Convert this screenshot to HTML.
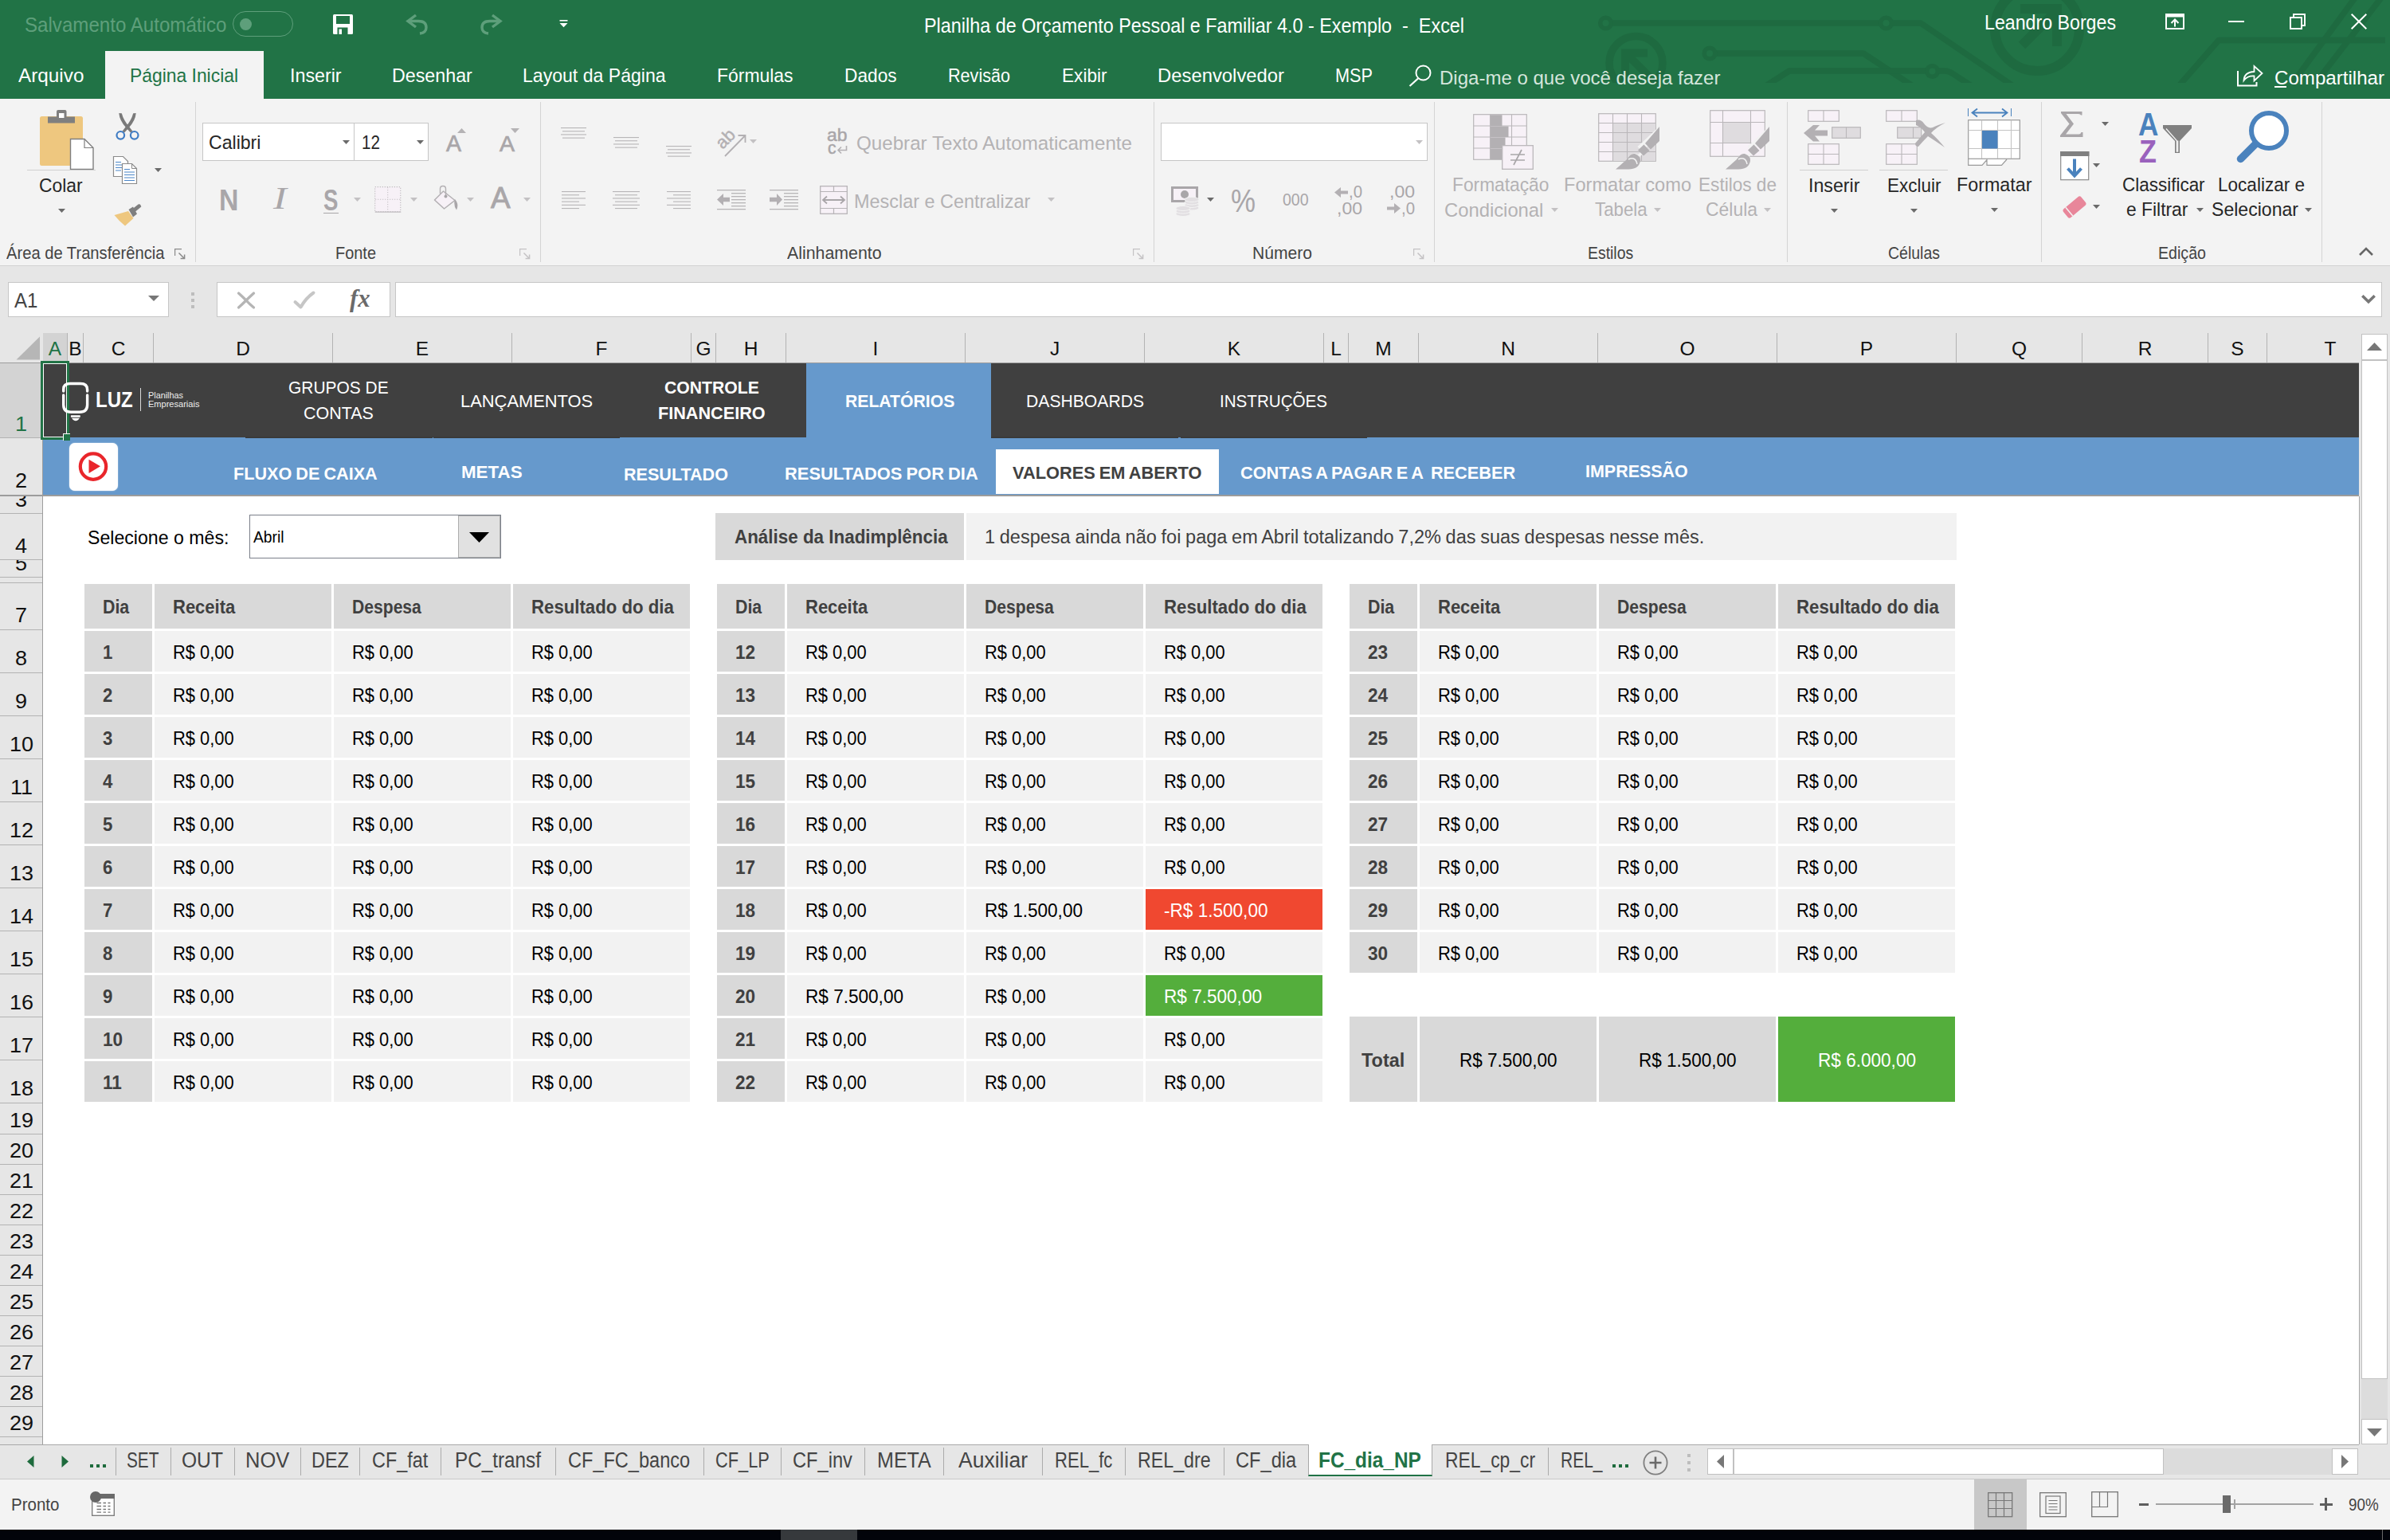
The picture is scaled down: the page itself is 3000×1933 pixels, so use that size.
<!DOCTYPE html>
<html lang="pt-BR"><head><meta charset="utf-8"><title>Planilha de Orçamento Pessoal e Familiar 4.0 - Exemplo - Excel</title>
<style>
html,body{margin:0;padding:0;background:#fff;}
body{width:3000px;height:1933px;overflow:hidden;position:relative;font-family:"Liberation Sans",sans-serif;}
.a{position:absolute;box-sizing:border-box;}
.t{position:absolute;white-space:pre;transform-origin:0 0;display:block;}
svg{overflow:visible;}
</style></head>
<body>
<!-- p1_title -->
<div class="a" id="titlebar" style="left:0;top:0;width:3000px;height:124px;background:#217346;overflow:hidden">
<svg class="a" style="left:0;top:0;overflow:hidden" width="3000" height="104" viewBox="0 0 3000 104"><g fill="none" stroke="#1e6a40" stroke-width="7.5" stroke-linecap="butt" stroke-linejoin="round">
<path d="M2023 29 H2360"/><circle cx="2015.5" cy="29" r="6.8" stroke-width="5.5"/>
<circle cx="2367.5" cy="29" r="6.8" stroke-width="5.5"/>
<path d="M2375 29 H2411 L2530 110"/>
<path d="M2154 67 H2339 L2404 110"/><circle cx="2146" cy="67" r="6.8" stroke-width="5.5"/>
<path d="M2213 110 L2246 89 H2418"/>
<circle cx="2425.5" cy="89.5" r="6.8" stroke-width="5.5"/>
<path d="M2433 89 H2441 Q2446 89 2452 93 L2478 110"/>
<circle cx="2053.5" cy="79" r="33.5" stroke-width="9.5"/>
<path d="M2035 66.5 H2068 M2040 62 V104 M2040 66 L2072 98" stroke-width="10" stroke-linejoin="miter"/>
<circle cx="2557" cy="36" r="53" stroke-width="12"/>
<path d="M2536 11 H2582 V58 M2538 57 L2578 17" stroke-width="12" stroke-linejoin="miter"/>
<path d="M2733 110 L2785 50.5 H2994"/>
<path d="M2873.6 110 L2957 -4"/>
<path d="M2902 110 L2990 -4"/>
</g></svg>
</div>
<span class="t" style="left:30.6px;top:19.24px;font-size:25px;line-height:25px;color:#5e9f7b;transform:scaleX(0.9648);">Salvamento Automático</span>
<div class="a" style="left:292px;top:14px;width:76px;height:32px;border:1.5px solid #5e9f7b;border-radius:16px"></div>
<div class="a" style="left:300.5px;top:22.5px;width:15px;height:15px;border-radius:50%;background:#5e9f7b"></div>
<svg class="a" style="left:418px;top:18px;" width="25" height="25" viewBox="0 0 25 25"><path d="M1.5 0H23.5Q25 0 25 1.5V23.5Q25 25 23.5 25H1.5Q0 25 0 23.5V1.5Q0 0 1.5 0Z" fill="#fff"/><rect x="4" y="2" width="17" height="10" fill="#217346"/><rect x="5.5" y="16.5" width="13" height="8.5" fill="#217346"/><rect x="7.5" y="18.5" width="3.5" height="6.5" fill="#fff"/></svg>
<svg class="a" style="left:508px;top:15px;" width="32" height="30" viewBox="0 0 32 30"><path d="M14 4 L4 11.5 L14 19" fill="none" stroke="#5e9f7b" stroke-width="3.4" stroke-linejoin="miter"/><path d="M5 11.5 H17 Q27 11.5 27 19.5 Q27 26 19 27" fill="none" stroke="#5e9f7b" stroke-width="3.4"/></svg>
<svg class="a" style="left:602px;top:15px;" width="32" height="30" viewBox="0 0 32 30"><path d="M16 4 L26 11.5 L16 19" fill="none" stroke="#5e9f7b" stroke-width="3.4"/><path d="M25 11.5 H13 Q3 11.5 3 19.5 Q3 26 11 27" fill="none" stroke="#5e9f7b" stroke-width="3.4"/></svg>
<svg class="a" style="left:702px;top:24px;" width="11" height="11" viewBox="0 0 11 11"><rect x="0.5" y="1" width="10" height="1.6" fill="#fff"/><path d="M0.5 5 H10.5 L5.5 10.2Z" fill="#fff"/></svg>
<span class="t" style="left:1160px;top:20.24px;font-size:25px;line-height:25px;color:#fff;transform:scaleX(0.9348);">Planilha de Orçamento Pessoal e Familiar 4.0 - Exemplo  -  Excel</span>
<span class="t" style="left:2491px;top:16.24px;font-size:25px;line-height:25px;color:#fff;transform:scaleX(0.9275);">Leandro Borges</span>
<svg class="a" style="left:2718px;top:17px;" width="24" height="20" viewBox="0 0 24 20"><rect x="1" y="1" width="22" height="18" fill="none" stroke="#fff" stroke-width="2"/><rect x="1" y="1" width="22" height="3.5" fill="#fff"/><path d="M12 16.5 V8 M7.5 12 L12 7.5 L16.5 12" fill="none" stroke="#fff" stroke-width="2"/></svg>
<div class="a " style="left:2797px;top:26px;width:20px;height:2px;background:#fff;"></div>
<svg class="a" style="left:2874px;top:17px;" width="20" height="20" viewBox="0 0 20 20"><rect x="1" y="5" width="14" height="14" fill="none" stroke="#fff" stroke-width="2"/><path d="M5 5 V1 H19 V15 H15" fill="none" stroke="#fff" stroke-width="2"/></svg>
<svg class="a" style="left:2951px;top:17px;" width="20" height="20" viewBox="0 0 20 20"><path d="M0.7 0.7 L19.3 19.3 M19.3 0.7 L0.7 19.3" stroke="#fff" stroke-width="2" fill="none"/></svg>
<div class="a " style="left:132px;top:64px;width:199px;height:60px;background:#f3f3f3;"></div>
<span class="t" style="left:23px;top:82.66px;font-size:24.5px;line-height:24.5px;color:#fff;transform:scaleX(0.9918);">Arquivo</span>
<span class="t" style="left:163px;top:82.66px;font-size:24.5px;line-height:24.5px;color:#217346;transform:scaleX(0.9333);">Página Inicial</span>
<span class="t" style="left:364px;top:82.66px;font-size:24.5px;line-height:24.5px;color:#fff;transform:scaleX(0.9491);">Inserir</span>
<span class="t" style="left:491.6px;top:82.66px;font-size:24.5px;line-height:24.5px;color:#fff;transform:scaleX(0.9489);">Desenhar</span>
<span class="t" style="left:656px;top:82.66px;font-size:24.5px;line-height:24.5px;color:#fff;transform:scaleX(0.9416);">Layout da Página</span>
<span class="t" style="left:900px;top:82.66px;font-size:24.5px;line-height:24.5px;color:#fff;transform:scaleX(0.9362);">Fórmulas</span>
<span class="t" style="left:1060px;top:82.66px;font-size:24.5px;line-height:24.5px;color:#fff;transform:scaleX(0.9262);">Dados</span>
<span class="t" style="left:1190px;top:82.66px;font-size:24.5px;line-height:24.5px;color:#fff;transform:scaleX(0.8812);">Revisão</span>
<span class="t" style="left:1333px;top:82.66px;font-size:24.5px;line-height:24.5px;color:#fff;transform:scaleX(0.9237);">Exibir</span>
<span class="t" style="left:1453px;top:82.66px;font-size:24.5px;line-height:24.5px;color:#fff;transform:scaleX(0.9730);">Desenvolvedor</span>
<span class="t" style="left:1676px;top:82.66px;font-size:24.5px;line-height:24.5px;color:#fff;transform:scaleX(0.8853);">MSP</span>
<svg class="a" style="left:1768px;top:78px;" width="32" height="32" viewBox="0 0 32 32"><circle cx="18.5" cy="13.5" r="9" fill="none" stroke="#fff" stroke-width="2"/><path d="M12 20.5 L1.5 30" stroke="#fff" stroke-width="2.2" fill="none"/></svg>
<span class="t" style="left:1807px;top:85.66px;font-size:24.5px;line-height:24.5px;color:#d5e6dc;transform:scaleX(0.9801);">Diga-me o que você deseja fazer</span>
<svg class="a" style="left:2808px;top:80px;" width="34" height="29" viewBox="0 0 34 29"><path d="M1 9 V27.5 H24.5 V23" fill="none" stroke="#fff" stroke-width="2"/><path d="M8.5 21 Q9 10.5 21.5 10 V3 L31.5 12 L21.5 21.5 V15.5 Q13 15 8.5 21Z" fill="none" stroke="#fff" stroke-width="1.8" stroke-linejoin="miter"/></svg>
<span class="t" style="left:2855px;top:85.66px;font-size:24.5px;line-height:24.5px;color:#fff;transform:scaleX(0.9840);">Compartilhar</span>
<div class="a " style="left:2855px;top:108px;width:15px;height:1.5px;background:#fff;"></div>
<!-- p2_ribbon -->
<div class="a" id="ribbon" style="left:0;top:124px;width:3000px;height:210px;background:#f3f3f3;border-bottom:1px solid #d2d2d2"></div>
<div class="a " style="left:245px;top:128px;width:1px;height:201px;background:#d4d4d4;"></div>
<div class="a " style="left:678px;top:128px;width:1px;height:201px;background:#d4d4d4;"></div>
<div class="a " style="left:1448px;top:128px;width:1px;height:201px;background:#d4d4d4;"></div>
<div class="a " style="left:1800px;top:128px;width:1px;height:201px;background:#d4d4d4;"></div>
<div class="a " style="left:2243px;top:128px;width:1px;height:201px;background:#d4d4d4;"></div>
<div class="a " style="left:2562px;top:128px;width:1px;height:201px;background:#d4d4d4;"></div>
<div class="a " style="left:2914px;top:128px;width:1px;height:201px;background:#d4d4d4;"></div>
<svg class="a" style="left:50px;top:138px;" width="68" height="76" viewBox="0 0 68 76"><rect x="0" y="8" width="54" height="62" rx="2.5" fill="#eec77f"/>
<path d="M10 8.5 H21 V2 Q21 0 23 0 H31.5 Q33.5 0 33.5 2 V8.5 H44 V16.5 H10Z" fill="#7f7f7f"/>
<rect x="24" y="4" width="6.5" height="6" fill="#fff"/>
<path d="M38.5 36.5 H56 L67 47.5 V74.5 H38.5Z" fill="#fff" stroke="#7f7f7f" stroke-width="1.4"/>
<path d="M56 36.5 V47.5 H67" fill="none" stroke="#7f7f7f" stroke-width="1.2"/></svg>
<div class="a " style="left:34px;top:213px;width:86px;height:1px;background:#d0d0d0;"></div>
<span class="t" style="left:49.4px;top:221.26px;font-size:24.5px;line-height:24.5px;color:#262626;transform:scaleX(0.9325);">Colar</span>
<svg class="a" style="left:73px;top:262px;" width="9" height="5" viewBox="0 0 9 5"><path d="M0 0H9L4.5 5Z" fill="#6a6a6a"/></svg>
<svg class="a" style="left:143px;top:140px;" width="34" height="38" viewBox="0 0 34 38"><path d="M6.3 2 L9.8 2.3 Q12 11 19.5 19.5 L23.5 24.8 L20.8 26.5 L15 20 Q7 11 6.3 2Z" fill="#7a7a7a"/>
<path d="M27.7 2 L24.2 2.3 Q22 11 14.5 19.5 L10.5 24.8 L13.2 26.5 L19 20 Q27 11 27.7 2Z" fill="#7a7a7a"/>
<circle cx="8.3" cy="29.8" r="4.8" fill="none" stroke="#3f7cc4" stroke-width="2.2"/>
<circle cx="25.7" cy="29.8" r="4.8" fill="none" stroke="#3f7cc4" stroke-width="2.2"/></svg>
<svg class="a" style="left:141px;top:195px;" width="33" height="37" viewBox="0 0 33 37"><path d="M1.5 1.5 H13.5 L19.5 7.5 V26.5 H1.5Z" fill="#fff" stroke="#8a8a8a" stroke-width="1.2"/>
<path d="M4 8.5H11M4 12H15M4 15.5H15M4 19H11" stroke="#4a86c8" stroke-width="1.2"/>
<path d="M12.5 10.5 H24.5 L30.5 16.5 V35.5 H12.5Z" fill="#fff" stroke="#8a8a8a" stroke-width="1.2"/>
<path d="M24.5 10.5 V16.5 H30.5" fill="none" stroke="#8a8a8a" stroke-width="1"/>
<path d="M15 17.5H22M15 21H28M15 24.5H28M15 28H28M15 31.5H28" stroke="#4a86c8" stroke-width="1.2"/></svg>
<svg class="a" style="left:194px;top:211px;" width="9" height="5" viewBox="0 0 9 5"><path d="M0 0H9L4.5 5Z" fill="#6a6a6a"/></svg>
<svg class="a" style="left:142px;top:255px;" width="36" height="30" viewBox="0 0 36 30"><path d="M24 7.5 L31.5 1.5 Q33.5 0.5 34.5 2.5 L35.3 4.5 L27.5 11Z" fill="#7f7f7f"/>
<path d="M19.5 8 L25 4.5 L30 13.5 L25 17.5Z" fill="#7f7f7f"/>
<path d="M1.5 15 L19 10 L25.5 19 L15 28.5 Q7 22 1.5 15Z" fill="#eec77f"/></svg>
<span class="t" style="left:7.5px;top:307.12px;font-size:21.6px;line-height:21.6px;color:#444;transform:scaleX(0.9339);">Área de Transferência</span>
<svg class="a" style="left:218.5px;top:311.5px;" width="14" height="14" viewBox="0 0 14 14"><path d="M0.6 9 V0.6 H9" fill="none" stroke="#8a8a8a" stroke-width="1.2"/><path d="M5.5 5.5 L12.2 12.2 M12.6 7.6 V12.6 H7.6" fill="none" stroke="#8a8a8a" stroke-width="1.5"/></svg>
<div class="a" style="left:254px;top:154px;width:284px;height:48px;background:#fff;border:1px solid #c6c6c6"></div>
<div class="a " style="left:444px;top:155px;width:1px;height:46px;background:#c6c6c6;"></div>
<span class="t" style="left:261.6px;top:167.26px;font-size:24.5px;line-height:24.5px;color:#262626;transform:scaleX(0.9419);">Calibri</span>
<svg class="a" style="left:430px;top:175.5px;" width="9" height="5" viewBox="0 0 9 5"><path d="M0 0H9L4.5 5Z" fill="#6a6a6a"/></svg>
<span class="t" style="left:454px;top:167.26px;font-size:24.5px;line-height:24.5px;color:#262626;transform:scaleX(0.8442);">12</span>
<svg class="a" style="left:523px;top:175.5px;" width="9" height="5" viewBox="0 0 9 5"><path d="M0 0H9L4.5 5Z" fill="#6a6a6a"/></svg>
<span class="t" style="left:560px;top:165.85px;font-size:29px;line-height:29px;color:#a9a6a9;transform:scaleX(0.9823);-webkit-text-stroke:0.7px #a9a6a9;">A</span>
<svg class="a" style="left:574px;top:160.5px;" width="11" height="6" viewBox="0 0 11 6"><path d="M0 6H11L5.5 0Z" fill="#b5b3b5"/></svg>
<span class="t" style="left:627px;top:167.12px;font-size:27.5px;line-height:27.5px;color:#a9a6a9;transform:scaleX(1.0358);-webkit-text-stroke:0.7px #a9a6a9;">A</span>
<svg class="a" style="left:641px;top:160.5px;" width="11" height="6" viewBox="0 0 11 6"><path d="M0 0H11L5.5 6Z" fill="#b5b3b5"/></svg>
<span class="t" style="left:275px;top:232.68px;font-size:37px;line-height:37px;color:#a9a6a9;font-weight:700;transform:scaleX(0.9134);">N</span>
<span class="t" style="left:343.2px;top:229.39px;font-size:39px;line-height:39px;color:#a9a6a9;font-style:italic;font-family:'Liberation Serif',serif;transform:scaleX(1.2923);">I</span>
<span class="t" style="left:406px;top:233.53px;font-size:36px;line-height:36px;color:#a9a6a9;font-weight:700;transform:scaleX(0.7663);">S</span>
<div class="a " style="left:406px;top:266.5px;width:19px;height:1.5px;background:#a9a6a9;"></div>
<svg class="a" style="left:444px;top:248px;" width="9" height="5" viewBox="0 0 9 5"><path d="M0 0H9L4.5 5Z" fill="#c3c1c3"/></svg>
<svg class="a" style="left:470px;top:234px;" width="34" height="33" viewBox="0 0 34 33"><rect x="0.7" y="0.7" width="32" height="31" fill="#f7f1f7" stroke="#c2bec2" stroke-width="1.2" stroke-dasharray="1.3 1.7"/>
<path d="M16.7 1 V32 M1 16.2 H33" stroke="#c8c4c8" stroke-width="1.1" stroke-dasharray="1.3 1.7"/>
<path d="M0.7 32.2 H33.3" stroke="#c2bec2" stroke-width="1.3"/></svg>
<svg class="a" style="left:515px;top:248px;" width="9" height="5" viewBox="0 0 9 5"><path d="M0 0H9L4.5 5Z" fill="#c3c1c3"/></svg>
<svg class="a" style="left:544px;top:232px;" width="33" height="33" viewBox="0 0 33 33"><path d="M12.5 8 L27 19.5 L13.5 30 L1.5 19Z" fill="#f7f1f7" stroke="#b3b0b3" stroke-width="1.5" stroke-linejoin="round"/>
<path d="M8.5 11 V5 Q8.5 1.5 12 1.5 Q15.5 1.5 15.5 5 V14" fill="none" stroke="#b3b0b3" stroke-width="1.4"/>
<circle cx="15.5" cy="14.5" r="2" fill="#a9a6a9"/>
<path d="M27 18 Q32.5 24 29 31.5 Q25.5 27 26.5 20Z" fill="#a9a6a9"/></svg>
<svg class="a" style="left:586px;top:248px;" width="9" height="5" viewBox="0 0 9 5"><path d="M0 0H9L4.5 5Z" fill="#c3c1c3"/></svg>
<span class="t" style="left:616.4px;top:230.26px;font-size:37.5px;line-height:37.5px;color:#a9a6a9;transform:scaleX(0.9835);-webkit-text-stroke:0.9px #a9a6a9;">A</span>
<svg class="a" style="left:657px;top:248px;" width="9" height="5" viewBox="0 0 9 5"><path d="M0 0H9L4.5 5Z" fill="#c3c1c3"/></svg>
<span class="t" style="left:420.5px;top:307.12px;font-size:21.6px;line-height:21.6px;color:#444;transform:scaleX(0.9234);">Fonte</span>
<svg class="a" style="left:652px;top:311.5px;" width="14" height="14" viewBox="0 0 14 14"><path d="M0.6 9 V0.6 H9" fill="none" stroke="#c4c2c4" stroke-width="1.2"/><path d="M5.5 5.5 L12.2 12.2 M12.6 7.6 V12.6 H7.6" fill="none" stroke="#c4c2c4" stroke-width="1.5"/></svg>
<svg class="a" style="left:704px;top:160px;" width="32" height="18" viewBox="0 0 32 18"><rect x="0.0" y="0.0" width="32" height="1.1" fill="#b7b5b7"/><rect x="2.0" y="4.2" width="28" height="1.1" fill="#b7b5b7"/><rect x="0.0" y="8.4" width="32" height="1.1" fill="#b7b5b7"/><rect x="2.0" y="12.6" width="28" height="1.1" fill="#b7b5b7"/></svg>
<svg class="a" style="left:770px;top:172px;" width="32" height="18" viewBox="0 0 32 18"><rect x="0.0" y="0.0" width="32" height="1.1" fill="#b7b5b7"/><rect x="2.0" y="4.2" width="28" height="1.1" fill="#b7b5b7"/><rect x="0.0" y="8.4" width="32" height="1.1" fill="#b7b5b7"/><rect x="2.0" y="12.6" width="28" height="1.1" fill="#b7b5b7"/></svg>
<svg class="a" style="left:836px;top:183px;" width="32" height="18" viewBox="0 0 32 18"><rect x="0.0" y="0.0" width="32" height="1.1" fill="#b7b5b7"/><rect x="2.0" y="4.2" width="28" height="1.1" fill="#b7b5b7"/><rect x="0.0" y="8.4" width="32" height="1.1" fill="#b7b5b7"/><rect x="2.0" y="12.6" width="28" height="1.1" fill="#b7b5b7"/></svg>
<svg class="a" style="left:705px;top:240px;" width="30" height="27" viewBox="0 0 30 27"><rect x="0.0" y="0.0" width="30" height="1.1" fill="#b7b5b7"/><rect x="0.0" y="4.2" width="22" height="1.1" fill="#b7b5b7"/><rect x="0.0" y="8.4" width="30" height="1.1" fill="#b7b5b7"/><rect x="0.0" y="12.6" width="22" height="1.1" fill="#b7b5b7"/><rect x="0.0" y="16.8" width="30" height="1.1" fill="#b7b5b7"/><rect x="0.0" y="21.0" width="22" height="1.1" fill="#b7b5b7"/></svg>
<svg class="a" style="left:769px;top:240px;" width="34" height="27" viewBox="0 0 34 27"><rect x="0.0" y="0.0" width="34" height="1.1" fill="#b7b5b7"/><rect x="3.0" y="4.2" width="28" height="1.1" fill="#b7b5b7"/><rect x="0.0" y="8.4" width="34" height="1.1" fill="#b7b5b7"/><rect x="3.0" y="12.6" width="28" height="1.1" fill="#b7b5b7"/><rect x="0.0" y="16.8" width="34" height="1.1" fill="#b7b5b7"/><rect x="3.0" y="21.0" width="28" height="1.1" fill="#b7b5b7"/></svg>
<svg class="a" style="left:837px;top:240px;" width="30" height="27" viewBox="0 0 30 27"><rect x="0.0" y="0.0" width="30" height="1.1" fill="#b7b5b7"/><rect x="8.0" y="4.2" width="22" height="1.1" fill="#b7b5b7"/><rect x="0.0" y="8.4" width="30" height="1.1" fill="#b7b5b7"/><rect x="8.0" y="12.6" width="22" height="1.1" fill="#b7b5b7"/><rect x="0.0" y="16.8" width="30" height="1.1" fill="#b7b5b7"/><rect x="8.0" y="21.0" width="22" height="1.1" fill="#b7b5b7"/></svg>
<svg class="a" style="left:899px;top:160px;" width="38" height="37" viewBox="0 0 38 37"><path d="M11 36 L36 10.5 M27.5 10 H36.5 V19" fill="none" stroke="#b3b0b3" stroke-width="1.8"/>
<text x="0" y="0" transform="translate(8 28) rotate(-45)" font-family="Liberation Sans, sans-serif" font-size="22" fill="#b3b0b3" stroke="#b3b0b3" stroke-width="0.5">ab</text></svg>
<svg class="a" style="left:941px;top:175px;" width="9" height="5" viewBox="0 0 9 5"><path d="M0 0H9L4.5 5Z" fill="#c3c1c3"/></svg>
<svg class="a" style="left:900px;top:238px;" width="36" height="26" viewBox="0 0 36 26"><rect x="0" y="0" width="36" height="1.3" fill="#b7b5b7"/><rect x="0" y="24" width="36" height="1.3" fill="#b7b5b7"/><rect x="18" y="4.0" width="18" height="1.3" fill="#b7b5b7"/><rect x="18" y="8.0" width="18" height="1.3" fill="#b7b5b7"/><rect x="18" y="12.0" width="18" height="1.3" fill="#b7b5b7"/><rect x="18" y="16.0" width="18" height="1.3" fill="#b7b5b7"/><rect x="18" y="20.0" width="18" height="1.3" fill="#b7b5b7"/><path d="M16 9.8 H8 V5 L0 12.5 L8 20 V15.2 H16Z" fill="#b3b0b3"/></svg>
<svg class="a" style="left:966px;top:238px;" width="36" height="26" viewBox="0 0 36 26"><rect x="0" y="0" width="36" height="1.3" fill="#b7b5b7"/><rect x="0" y="24" width="36" height="1.3" fill="#b7b5b7"/><rect x="18" y="4.0" width="18" height="1.3" fill="#b7b5b7"/><rect x="18" y="8.0" width="18" height="1.3" fill="#b7b5b7"/><rect x="18" y="12.0" width="18" height="1.3" fill="#b7b5b7"/><rect x="18" y="16.0" width="18" height="1.3" fill="#b7b5b7"/><rect x="18" y="20.0" width="18" height="1.3" fill="#b7b5b7"/><path d="M0 9.8 H9 V5 L16 12.5 L9 20 V15.2 H0Z" fill="#b3b0b3"/></svg>
<span class="t" style="left:1037.6px;top:159.35px;font-size:22.5px;line-height:22.5px;color:#a9a6a9;transform:scaleX(1.0152);-webkit-text-stroke:0.5px #a9a6a9;">ab</span>
<span class="t" style="left:1038.5px;top:175.35px;font-size:22.5px;line-height:22.5px;color:#a9a6a9;transform:scaleX(0.9333);-webkit-text-stroke:0.5px #a9a6a9;">c</span>
<svg class="a" style="left:1050px;top:182.5px;" width="14" height="11" viewBox="0 0 14 11"><path d="M12.5 0 V5.5 H2 M6 1.5 L2 5.5 L6 9.5" fill="none" stroke="#b3b0b3" stroke-width="1.6"/></svg>
<span class="t" style="left:1075px;top:167.66px;font-size:24.5px;line-height:24.5px;color:#b4b2b4;transform:scaleX(0.9860);">Quebrar Texto Automaticamente</span>
<svg class="a" style="left:1029px;top:233px;" width="35" height="36" viewBox="0 0 35 36"><rect x="0.7" y="0.7" width="33.6" height="34.6" fill="#f7f1f7" stroke="#b7b4b7" stroke-width="1.3"/>
<path d="M0.7 7.5 H34.3 M0.7 28.5 H34.3 M17.5 0.7 V7.5 M17.5 28.5 V35.3" stroke="#b7b4b7" stroke-width="1.2"/>
<path d="M4 18 H31 M9 13.5 L4 18 L9 22.5 M26 13.5 L31 18 L26 22.5" fill="none" stroke="#a9a6a9" stroke-width="1.8"/></svg>
<span class="t" style="left:1072.4px;top:240.66px;font-size:24.5px;line-height:24.5px;color:#b4b2b4;transform:scaleX(0.9557);">Mesclar e Centralizar</span>
<svg class="a" style="left:1315px;top:248px;" width="9" height="5" viewBox="0 0 9 5"><path d="M0 0H9L4.5 5Z" fill="#c3c1c3"/></svg>
<span class="t" style="left:988px;top:307.12px;font-size:21.6px;line-height:21.6px;color:#444;transform:scaleX(0.9886);">Alinhamento</span>
<svg class="a" style="left:1422px;top:311.5px;" width="14" height="14" viewBox="0 0 14 14"><path d="M0.6 9 V0.6 H9" fill="none" stroke="#c4c2c4" stroke-width="1.2"/><path d="M5.5 5.5 L12.2 12.2 M12.6 7.6 V12.6 H7.6" fill="none" stroke="#c4c2c4" stroke-width="1.5"/></svg>
<div class="a" style="left:1457px;top:154px;width:335px;height:48px;background:#fff;border:1px solid #c6c6c6"></div>
<svg class="a" style="left:1777px;top:175.5px;" width="9" height="5" viewBox="0 0 9 5"><path d="M0 0H9L4.5 5Z" fill="#c3c1c3"/></svg>
<svg class="a" style="left:1470px;top:234px;" width="35" height="38" viewBox="0 0 35 38"><rect x="0" y="0" width="34" height="20" rx="1.5" fill="#a9a6a9"/>
<rect x="3" y="3" width="28" height="14" fill="#f7f1f7"/><circle cx="17" cy="10" r="5" fill="#a9a6a9"/>
<path d="M0 0 L6 0 L0 6Z M34 0 L28 0 L34 6Z M0 20 L6 20 L0 14Z" fill="#a9a6a9"/>
<g fill="#e2dfe2" stroke="#f3f3f3" stroke-width="1"><ellipse cx="26" cy="27" rx="9" ry="3"/><ellipse cx="26" cy="23.5" rx="9" ry="3"/><ellipse cx="26" cy="20" rx="9" ry="3"/><ellipse cx="26" cy="16.5" rx="9" ry="3"/>
<ellipse cx="15" cy="34.5" rx="9" ry="3"/><ellipse cx="15" cy="31" rx="9" ry="3"/><ellipse cx="15" cy="27.5" rx="9" ry="3"/></g></svg>
<svg class="a" style="left:1515px;top:248px;" width="9" height="5" viewBox="0 0 9 5"><path d="M0 0H9L4.5 5Z" fill="#6a6a6a"/></svg>
<span class="t" style="left:1545px;top:231.54px;font-size:40px;line-height:40px;color:#a9a6a9;transform:scaleX(0.8718);">%</span>
<span class="t" style="left:1610.4px;top:239.95px;font-size:22.5px;line-height:22.5px;color:#a9a6a9;transform:scaleX(0.8686);">000</span>
<span class="t" style="left:1693px;top:230.28px;font-size:22px;line-height:22px;color:#a9a6a9;transform:scaleX(0.9265);">,0</span>
<span class="t" style="left:1678px;top:250.78px;font-size:22px;line-height:22px;color:#a9a6a9;transform:scaleX(1.0464);">,00</span>
<svg class="a" style="left:1675px;top:234px;" width="17" height="14" viewBox="0 0 17 14"><path d="M17 5.5 H8 V1 L0 7.5 L8 14 V9.5 H17Z" fill="#b3b0b3"/></svg>
<span class="t" style="left:1744px;top:230.28px;font-size:22px;line-height:22px;color:#a9a6a9;transform:scaleX(1.0464);">,00</span>
<span class="t" style="left:1759px;top:250.78px;font-size:22px;line-height:22px;color:#a9a6a9;transform:scaleX(0.9265);">,0</span>
<svg class="a" style="left:1741px;top:254px;" width="17" height="14" viewBox="0 0 17 14"><path d="M0 5.5 H9 V1 L17 7.5 L9 14 V9.5 H0Z" fill="#b3b0b3"/></svg>
<span class="t" style="left:1572px;top:307.12px;font-size:21.6px;line-height:21.6px;color:#444;transform:scaleX(0.9762);">Número</span>
<svg class="a" style="left:1774px;top:311.5px;" width="14" height="14" viewBox="0 0 14 14"><path d="M0.6 9 V0.6 H9" fill="none" stroke="#c4c2c4" stroke-width="1.2"/><path d="M5.5 5.5 L12.2 12.2 M12.6 7.6 V12.6 H7.6" fill="none" stroke="#c4c2c4" stroke-width="1.5"/></svg>
<!-- p3_ribbon2 -->
<svg class="a" style="left:1849px;top:143px;" width="76" height="70" viewBox="0 0 76 70"><rect x="0.7" y="0.7" width="66.6" height="56.6" fill="#f7f1f7" stroke="#bab7ba" stroke-width="1.2"/>
<path d="M0.7 15 H67 M0.7 29 H67 M0.7 43 H67 M21.5 0.7 V57 M48.5 0.7 V57" stroke="#bab7ba" stroke-width="1.1"/>
<rect x="22" y="1.2" width="14.5" height="14" fill="#b3b0b3"/><rect x="22" y="15.5" width="22.5" height="13.5" fill="#b3b0b3"/>
<rect x="22" y="29.5" width="18.5" height="13.5" fill="#b3b0b3"/><rect x="22" y="43.5" width="14.5" height="13.5" fill="#b3b0b3"/>
<rect x="36.7" y="39.7" width="38.6" height="29.6" fill="#f7f1f7" stroke="#bab7ba" stroke-width="1.3"/>
<path d="M47 51 H65 M47 58 H65 M61 45 L51 64" stroke="#a9a6a9" stroke-width="1.7" fill="none"/></svg>
<span class="t" style="left:1823.4px;top:220.16px;font-size:24.5px;line-height:24.5px;color:#b4b2b4;transform:scaleX(0.9288);">Formatação</span>
<span class="t" style="left:1812.6px;top:251.66px;font-size:24.5px;line-height:24.5px;color:#b4b2b4;transform:scaleX(0.9716);">Condicional</span>
<svg class="a" style="left:1946.5px;top:260.5px;" width="9" height="5" viewBox="0 0 9 5"><path d="M0 0H9L4.5 5Z" fill="#c3c1c3"/></svg>
<svg class="a" style="left:2006px;top:142px;" width="78" height="71" viewBox="0 0 78 71"><rect x="0.7" y="0.7" width="71.6" height="59.6" fill="#f7f1f7" stroke="#bab7ba" stroke-width="1.2"/>
<rect x="18.5" y="12.5" width="53.5" height="47.5" fill="#dfdcdf"/>
<path d="M0.7 12.5 H72 M0.7 24.5 H72 M0.7 36.5 H72 M0.7 48.5 H72 M18.5 0.7 V60 M36.5 0.7 V60 M54.5 0.7 V60" stroke="#bab7ba" stroke-width="1.1"/>
<path d="M22 70.5 L36 58 Q43 47 50 52 L77 29 V16.5 L49.5 42 L57 50.5 L50 56.5 Q55 70.5 38 70.5Z" fill="#f3f3f3"/>
<path d="M22 70.5 L36 58 Q41 50 46 51 Q54 54 53 60 Q51 70.5 38 70.5Z" fill="#b3b0b3"/>
<path d="M38 58 Q47 54 49 64" fill="none" stroke="#f3f3f3" stroke-width="1.5"/>
<path d="M50 46.5 L57.5 39.5 L64.5 47 L57 53.5Z" fill="#b3b0b3"/>
<path d="M59 38 L77 17 V35 L66 45.5Z" fill="#b3b0b3"/></svg>
<span class="t" style="left:1963px;top:220.16px;font-size:24.5px;line-height:24.5px;color:#b4b2b4;transform:scaleX(0.9634);">Formatar como</span>
<span class="t" style="left:2002px;top:251.26px;font-size:24.5px;line-height:24.5px;color:#b4b2b4;transform:scaleX(0.9083);">Tabela</span>
<svg class="a" style="left:2076px;top:260.5px;" width="9" height="5" viewBox="0 0 9 5"><path d="M0 0H9L4.5 5Z" fill="#c3c1c3"/></svg>
<svg class="a" style="left:2146px;top:138px;" width="76" height="75" viewBox="0 0 76 75"><rect x="0.7" y="0.7" width="68.6" height="57.6" fill="#f7f1f7" stroke="#bab7ba" stroke-width="1.2"/>
<rect x="16.5" y="15.5" width="35" height="26" fill="#dfdcdf"/>
<path d="M0.7 15.5 H69 M0.7 41.5 H69 M16.5 0.7 V58 M51.5 0.7 V58" stroke="#bab7ba" stroke-width="1.1"/>
<path d="M20 74.5 L34 62 Q41 51 48 56 L75 33 V20.5 L47.5 46 L55 54.5 L48 60.5 Q53 74.5 36 74.5Z" fill="#f3f3f3"/>
<path d="M20 74.5 L34 62 Q39 54 44 55 Q52 58 51 64 Q49 74.5 36 74.5Z" fill="#b3b0b3"/>
<path d="M36 62 Q45 58 47 68" fill="none" stroke="#f3f3f3" stroke-width="1.5"/>
<path d="M48 50.5 L55.5 43.5 L62.5 51 L55 57.5Z" fill="#b3b0b3"/>
<path d="M57 42 L75 21 V39 L64 49.5Z" fill="#b3b0b3"/></svg>
<span class="t" style="left:2132px;top:220.16px;font-size:24.5px;line-height:24.5px;color:#b4b2b4;transform:scaleX(0.9227);">Estilos de</span>
<span class="t" style="left:2140.6px;top:251.26px;font-size:24.5px;line-height:24.5px;color:#b4b2b4;transform:scaleX(0.9355);">Célula</span>
<svg class="a" style="left:2214px;top:260.5px;" width="9" height="5" viewBox="0 0 9 5"><path d="M0 0H9L4.5 5Z" fill="#c3c1c3"/></svg>
<span class="t" style="left:1993px;top:307.12px;font-size:21.6px;line-height:21.6px;color:#444;transform:scaleX(0.8992);">Estilos</span>
<svg class="a" style="left:2263.6px;top:138px;" width="82" height="70" viewBox="0 0 82 70"><rect x="5.7" y="0.7" width="38.6" height="13.6" fill="#f7f1f7" stroke="#bab7ba" stroke-width="1.2"/><path d="M25 0.7 V14.3" stroke="#bab7ba" stroke-width="1.1"/>
<rect x="5.7" y="42.7" width="38.6" height="25.6" fill="#f7f1f7" stroke="#bab7ba" stroke-width="1.2"/><path d="M25 42.7 V68.3 M5.7 55.5 H44.3" stroke="#bab7ba" stroke-width="1.1"/><rect x="35.7" y="21.7" width="35.6" height="13.6" fill="#dfdcdf" stroke="#bab7ba" stroke-width="1.2"/><path d="M53.5 21.7 V35.3" stroke="#bab7ba" stroke-width="1.1"/><path d="M30 25.5 H14 L20 19 H12 L0 29 L12 39.5 H20 L14 32.5 H30Z" fill="#b3b0b3"/></svg>
<div class="a " style="left:2259px;top:213px;width:86px;height:1px;background:#d0d0d0;"></div>
<span class="t" style="left:2270px;top:221.26px;font-size:24.5px;line-height:24.5px;color:#262626;transform:scaleX(0.9462);">Inserir</span>
<svg class="a" style="left:2298px;top:262px;" width="9" height="5" viewBox="0 0 9 5"><path d="M0 0H9L4.5 5Z" fill="#6a6a6a"/></svg>
<svg class="a" style="left:2361.6px;top:138px;" width="82" height="70" viewBox="0 0 82 70"><rect x="5.7" y="0.7" width="38.6" height="13.6" fill="#f7f1f7" stroke="#bab7ba" stroke-width="1.2"/><path d="M25 0.7 V14.3" stroke="#bab7ba" stroke-width="1.1"/>
<rect x="5.7" y="42.7" width="38.6" height="25.6" fill="#f7f1f7" stroke="#bab7ba" stroke-width="1.2"/><path d="M25 42.7 V68.3 M5.7 55.5 H44.3" stroke="#bab7ba" stroke-width="1.1"/><rect x="19.7" y="21.7" width="30" height="13.6" fill="#dfdcdf" stroke="#bab7ba" stroke-width="1.2"/><path d="M39.5 21.7 V35.3" stroke="#bab7ba" stroke-width="1.1"/><path d="M43 13 Q49 11 53 17 Q58 24 64 22 Q70 19 80 16 Q68 22 62 29 Q70 36 79 47 Q66 38 58 33 Q51 40 46 46 Q42 46 42 42 Q47 36 54 28 Q50 22 43 19Z" fill="#b3b0b3"/></svg>
<div class="a " style="left:2359px;top:213px;width:86px;height:1px;background:#d0d0d0;"></div>
<span class="t" style="left:2369px;top:221.26px;font-size:24.5px;line-height:24.5px;color:#262626;transform:scaleX(0.9167);">Excluir</span>
<svg class="a" style="left:2398px;top:262px;" width="9" height="5" viewBox="0 0 9 5"><path d="M0 0H9L4.5 5Z" fill="#6a6a6a"/></svg>
<svg class="a" style="left:2470px;top:135px;" width="67" height="74" viewBox="0 0 67 74"><path d="M0.5 1 V11 M54.5 1 V11" stroke="#4a82bd" stroke-width="1"/>
<path d="M5 6.5 H50 M12 1.5 L5.5 6.5 L12 11.5 M43 1.5 L49.5 6.5 L43 11.5" fill="none" stroke="#4a82bd" stroke-width="1.8"/>
<path d="M0.7 64 V72.3 H18 L24 65.5 V72.3 H42.5 L49 65 " fill="#fff" stroke="#9a9a9a" stroke-width="1.2"/>
<rect x="0.7" y="15.7" width="64.6" height="48.6" fill="#fff" stroke="#9a9a9a" stroke-width="1.2"/>
<path d="M0.7 28.5 H65 M0.7 51.5 H65 M17.5 15.7 V64 M37.5 15.7 V64 M54.5 15.7 V64" stroke="#c4c4c4" stroke-width="1.1"/>
<rect x="18" y="29" width="19.5" height="22.5" fill="#4a82bd"/></svg>
<span class="t" style="left:2456px;top:219.66px;font-size:24.5px;line-height:24.5px;color:#262626;transform:scaleX(0.9500);">Formatar</span>
<svg class="a" style="left:2499px;top:260.5px;" width="9" height="5" viewBox="0 0 9 5"><path d="M0 0H9L4.5 5Z" fill="#6a6a6a"/></svg>
<span class="t" style="left:2370px;top:307.12px;font-size:21.6px;line-height:21.6px;color:#444;transform:scaleX(0.9023);">Células</span>
<svg class="a" style="left:2586px;top:140px;" width="29" height="32" viewBox="0 0 29 32"><path d="M1 0 H27.5 V4.5 H26 Q25.5 3 23 3 H7.5 L17 15.5 L7 28.5 H23.5 Q25.5 28.5 26.5 26 H28.5 V32 H0 V30 L11.5 15.5 L1 2Z" fill="#a9a6a9"/></svg>
<svg class="a" style="left:2638px;top:153px;" width="9" height="5" viewBox="0 0 9 5"><path d="M0 0H9L4.5 5Z" fill="#6a6a6a"/></svg>
<svg class="a" style="left:2586px;top:190px;" width="37" height="37" viewBox="0 0 37 37"><rect x="0.7" y="0.7" width="35" height="35" fill="#fff" stroke="#8a8a8a" stroke-width="1.2"/><rect x="0" y="0" width="36.4" height="6" fill="#808080"/>
<path d="M18 9.5 V30 M9.5 21.5 L18 30.5 L26.5 21.5" fill="none" stroke="#4a82bd" stroke-width="4"/></svg>
<svg class="a" style="left:2627px;top:205px;" width="9" height="5" viewBox="0 0 9 5"><path d="M0 0H9L4.5 5Z" fill="#6a6a6a"/></svg>
<svg class="a" style="left:2589px;top:245px;" width="30" height="30" viewBox="0 0 30 30"><g transform="rotate(-40 15 15)"><rect x="0.5" y="8" width="29" height="14" rx="3" fill="#e8869a"/><rect x="5.5" y="8" width="1.5" height="14" fill="#f3f3f3"/></g></svg>
<svg class="a" style="left:2627px;top:257px;" width="9" height="5" viewBox="0 0 9 5"><path d="M0 0H9L4.5 5Z" fill="#6a6a6a"/></svg>
<span class="t" style="left:2683.6px;top:135.69px;font-size:41px;line-height:41px;color:#4a82bd;font-weight:700;transform:scaleX(0.8581);">A</span>
<span class="t" style="left:2685px;top:169.69px;font-size:41px;line-height:41px;color:#9a62bd;font-weight:700;transform:scaleX(0.8782);">Z</span>
<svg class="a" style="left:2715px;top:157px;" width="37" height="36" viewBox="0 0 37 36"><path d="M0 0 H36 V4 L21 20 V35 H15 V20 L0 4Z" fill="#808080"/><path d="M4 4.5 L17.3 19.5 V33 H18.7 V19.5" fill="none" stroke="#f3f3f3" stroke-width="1.3"/></svg>
<span class="t" style="left:2664.4px;top:219.66px;font-size:24.5px;line-height:24.5px;color:#262626;transform:scaleX(0.9169);">Classificar</span>
<span class="t" style="left:2669px;top:251.26px;font-size:24.5px;line-height:24.5px;color:#262626;transform:scaleX(0.9322);">e Filtrar</span>
<svg class="a" style="left:2756.5px;top:260.5px;" width="9" height="5" viewBox="0 0 9 5"><path d="M0 0H9L4.5 5Z" fill="#6a6a6a"/></svg>
<svg class="a" style="left:2804px;top:137px;" width="72" height="72" viewBox="0 0 72 72"><path d="M30 41 L8.5 62.5" stroke="#4a82bd" stroke-width="9.5" stroke-linecap="round" fill="none"/><circle cx="44" cy="27" r="22" fill="#fff" stroke="#4a82bd" stroke-width="6"/></svg>
<span class="t" style="left:2784px;top:219.66px;font-size:24.5px;line-height:24.5px;color:#262626;transform:scaleX(0.9200);">Localizar e</span>
<span class="t" style="left:2776px;top:251.26px;font-size:24.5px;line-height:24.5px;color:#262626;transform:scaleX(0.9416);">Selecionar</span>
<svg class="a" style="left:2893px;top:260.5px;" width="9" height="5" viewBox="0 0 9 5"><path d="M0 0H9L4.5 5Z" fill="#6a6a6a"/></svg>
<span class="t" style="left:2709px;top:307.12px;font-size:21.6px;line-height:21.6px;color:#444;transform:scaleX(0.9084);">Edição</span>
<svg class="a" style="left:2961px;top:310px;" width="18" height="11" viewBox="0 0 18 11"><path d="M1 10 L9 2 L17 10" fill="none" stroke="#666" stroke-width="2.6"/></svg>
<!-- p4_grid -->
<div class="a " style="left:0px;top:334px;width:3000px;height:84px;background:#e6e6e6;"></div>
<div class="a" style="left:10px;top:354px;width:202px;height:44px;background:#fff;border:1px solid #c6c6c6"></div>
<span class="t" style="left:18px;top:364.84px;font-size:25px;line-height:25px;color:#444;transform:scaleX(0.9616);">A1</span>
<svg class="a" style="left:186px;top:371px;" width="14" height="7" viewBox="0 0 14 7"><path d="M0 0H14L7 7Z" fill="#777"/></svg>
<div class="a " style="left:240px;top:366.5px;width:4px;height:4px;background:#bdbdbd;"></div>
<div class="a " style="left:240px;top:374.5px;width:4px;height:4px;background:#bdbdbd;"></div>
<div class="a " style="left:240px;top:382.5px;width:4px;height:4px;background:#bdbdbd;"></div>
<div class="a" style="left:272px;top:354px;width:218px;height:44px;background:#fff;border:1px solid #c6c6c6"></div>
<svg class="a" style="left:298px;top:367px;" width="22" height="20" viewBox="0 0 22 20"><path d="M1.5 1 Q7 6 11 10 Q15 14.5 20.5 19 M20.5 1 Q14 7 11 10 Q6 15 1.5 19" fill="none" stroke="#b5b5b5" stroke-width="3.3" stroke-linecap="round"/></svg>
<svg class="a" style="left:369px;top:366px;" width="26" height="21" viewBox="0 0 26 21"><path d="M1.5 13 L8.5 19.5 Q15 8 24.5 1.5" fill="none" stroke="#c6c6c6" stroke-width="4" stroke-linejoin="round" stroke-linecap="round"/></svg>
<span class="t" style="left:439.4px;top:358.66px;font-size:31px;line-height:31px;color:#6a6a6a;font-weight:700;font-style:italic;font-family:'Liberation Serif',serif;transform:scaleX(0.9914);">fx</span>
<div class="a" style="left:496px;top:354px;width:2494px;height:44px;background:#fff;border:1px solid #c6c6c6"></div>
<svg class="a" style="left:2964px;top:370px;" width="18" height="11" viewBox="0 0 18 11"><path d="M1.3 1.3 L9 8.8 L16.7 1.3" fill="none" stroke="#777" stroke-width="3.6"/></svg>
<div class="a " style="left:0px;top:418px;width:3000px;height:38px;background:#e6e6e6;"></div>
<div class="a " style="left:0px;top:455px;width:2961px;height:1px;background:#9d9d9d;"></div>
<svg class="a" style="left:20px;top:422px;" width="31" height="30" viewBox="0 0 31 30"><path d="M30 0.5 V29.5 H0.5Z" fill="#b6b6b6"/></svg>
<div class="a " style="left:54px;top:418px;width:30px;height:37px;background:#d3d3d3;"></div>
<div class="a " style="left:84px;top:418px;width:1px;height:37px;background:#b3b3b3;"></div>
<span class="t" style="left:60.83px;top:426.06px;font-size:24.5px;line-height:24.5px;color:#217346;">A</span>
<div class="a " style="left:104px;top:418px;width:1px;height:37px;background:#b3b3b3;"></div>
<span class="t" style="left:86.33px;top:426.06px;font-size:24.5px;line-height:24.5px;color:#111;">B</span>
<div class="a " style="left:192px;top:418px;width:1px;height:37px;background:#b3b3b3;"></div>
<span class="t" style="left:139.66px;top:426.06px;font-size:24.5px;line-height:24.5px;color:#111;">C</span>
<div class="a " style="left:417px;top:418px;width:1px;height:37px;background:#b3b3b3;"></div>
<span class="t" style="left:296.16px;top:426.06px;font-size:24.5px;line-height:24.5px;color:#111;">D</span>
<div class="a " style="left:642px;top:418px;width:1px;height:37px;background:#b3b3b3;"></div>
<span class="t" style="left:521.83px;top:426.06px;font-size:24.5px;line-height:24.5px;color:#111;">E</span>
<div class="a " style="left:867px;top:418px;width:1px;height:37px;background:#b3b3b3;"></div>
<span class="t" style="left:747.52px;top:426.06px;font-size:24.5px;line-height:24.5px;color:#111;">F</span>
<div class="a " style="left:898px;top:418px;width:1px;height:37px;background:#b3b3b3;"></div>
<span class="t" style="left:873.47px;top:426.06px;font-size:24.5px;line-height:24.5px;color:#111;">G</span>
<div class="a " style="left:986px;top:418px;width:1px;height:37px;background:#b3b3b3;"></div>
<span class="t" style="left:933.66px;top:426.06px;font-size:24.5px;line-height:24.5px;color:#111;">H</span>
<div class="a " style="left:1211px;top:418px;width:1px;height:37px;background:#b3b3b3;"></div>
<span class="t" style="left:1095.59px;top:426.06px;font-size:24.5px;line-height:24.5px;color:#111;">I</span>
<div class="a " style="left:1436px;top:418px;width:1px;height:37px;background:#b3b3b3;"></div>
<span class="t" style="left:1317.88px;top:426.06px;font-size:24.5px;line-height:24.5px;color:#111;">J</span>
<div class="a " style="left:1661px;top:418px;width:1px;height:37px;background:#b3b3b3;"></div>
<span class="t" style="left:1540.83px;top:426.06px;font-size:24.5px;line-height:24.5px;color:#111;">K</span>
<div class="a " style="left:1692px;top:418px;width:1px;height:37px;background:#b3b3b3;"></div>
<span class="t" style="left:1670.19px;top:426.06px;font-size:24.5px;line-height:24.5px;color:#111;">L</span>
<div class="a " style="left:1780px;top:418px;width:1px;height:37px;background:#b3b3b3;"></div>
<span class="t" style="left:1726.3px;top:426.06px;font-size:24.5px;line-height:24.5px;color:#111;">M</span>
<div class="a " style="left:2005px;top:418px;width:1px;height:37px;background:#b3b3b3;"></div>
<span class="t" style="left:1884.16px;top:426.06px;font-size:24.5px;line-height:24.5px;color:#111;">N</span>
<div class="a " style="left:2230px;top:418px;width:1px;height:37px;background:#b3b3b3;"></div>
<span class="t" style="left:2108.47px;top:426.06px;font-size:24.5px;line-height:24.5px;color:#111;">O</span>
<div class="a " style="left:2455px;top:418px;width:1px;height:37px;background:#b3b3b3;"></div>
<span class="t" style="left:2334.83px;top:426.06px;font-size:24.5px;line-height:24.5px;color:#111;">P</span>
<div class="a " style="left:2613px;top:418px;width:1px;height:37px;background:#b3b3b3;"></div>
<span class="t" style="left:2524.97px;top:426.06px;font-size:24.5px;line-height:24.5px;color:#111;">Q</span>
<div class="a " style="left:2771px;top:418px;width:1px;height:37px;background:#b3b3b3;"></div>
<span class="t" style="left:2683.66px;top:426.06px;font-size:24.5px;line-height:24.5px;color:#111;">R</span>
<div class="a " style="left:2845px;top:418px;width:1px;height:37px;background:#b3b3b3;"></div>
<span class="t" style="left:2800.33px;top:426.06px;font-size:24.5px;line-height:24.5px;color:#111;">S</span>
<span class="t" style="left:2917.52px;top:426.06px;font-size:24.5px;line-height:24.5px;color:#111;">T</span>
<div class="a" id="rowhdr" style="left:0;top:456px;width:54px;height:1357px;background:#e6e6e6;border-right:1px solid #9d9d9d;overflow:hidden">
<div class="a " style="left:0px;top:0px;width:53px;height:93px;background:#d3d3d3;"></div>
<div class="a" style="left:0;top:0px;width:53px;height:94px;overflow:hidden;border-bottom:1px solid #b3b3b3">
<span class="t" style="left:19.29px;top:64.21px;font-size:25.5px;line-height:25.5px;color:#217346;transform:scaleX(1.0600);">1</span>
</div>
<div class="a" style="left:0;top:94px;width:53px;height:73px;overflow:hidden;border-bottom:1px solid #b3b3b3">
<span class="t" style="left:19.29px;top:41.41px;font-size:25.5px;line-height:25.5px;color:#111;transform:scaleX(1.0600);">2</span>
</div>
<div class="a" style="left:0;top:167px;width:53px;height:22px;overflow:hidden;border-bottom:1px solid #b3b3b3">
<span class="t" style="left:19.29px;top:-7.79px;font-size:25.5px;line-height:25.5px;color:#111;transform:scaleX(1.0600);">3</span>
</div>
<div class="a" style="left:0;top:189px;width:53px;height:58px;overflow:hidden;border-bottom:1px solid #b3b3b3">
<span class="t" style="left:19.29px;top:28.21px;font-size:25.5px;line-height:25.5px;color:#111;transform:scaleX(1.0600);">4</span>
</div>
<div class="a" style="left:0;top:247px;width:53px;height:22px;overflow:hidden;border-bottom:1px solid #b3b3b3">
<span class="t" style="left:19.29px;top:-7.79px;font-size:25.5px;line-height:25.5px;color:#111;transform:scaleX(1.0600);">5</span>
</div>
<div class="a " style="left:0px;top:275px;width:53px;height:1px;background:#b3b3b3;"></div>
<div class="a" style="left:0;top:276px;width:53px;height:59px;overflow:hidden;border-bottom:1px solid #b3b3b3">
<span class="t" style="left:19.29px;top:28.41px;font-size:25.5px;line-height:25.5px;color:#111;transform:scaleX(1.0600);">7</span>
</div>
<div class="a" style="left:0;top:335px;width:53px;height:54px;overflow:hidden;border-bottom:1px solid #b3b3b3">
<span class="t" style="left:19.29px;top:23.41px;font-size:25.5px;line-height:25.5px;color:#111;transform:scaleX(1.0600);">8</span>
</div>
<div class="a" style="left:0;top:389px;width:53px;height:54px;overflow:hidden;border-bottom:1px solid #b3b3b3">
<span class="t" style="left:19.29px;top:23.41px;font-size:25.5px;line-height:25.5px;color:#111;transform:scaleX(1.0600);">9</span>
</div>
<div class="a" style="left:0;top:443px;width:53px;height:54px;overflow:hidden;border-bottom:1px solid #b3b3b3">
<span class="t" style="left:11.77px;top:23.41px;font-size:25.5px;line-height:25.5px;color:#111;transform:scaleX(1.0600);">10</span>
</div>
<div class="a" style="left:0;top:497px;width:53px;height:54px;overflow:hidden;border-bottom:1px solid #b3b3b3">
<span class="t" style="left:12.77px;top:23.41px;font-size:25.5px;line-height:25.5px;color:#111;transform:scaleX(1.0600);">11</span>
</div>
<div class="a" style="left:0;top:551px;width:53px;height:54px;overflow:hidden;border-bottom:1px solid #b3b3b3">
<span class="t" style="left:11.77px;top:23.41px;font-size:25.5px;line-height:25.5px;color:#111;transform:scaleX(1.0600);">12</span>
</div>
<div class="a" style="left:0;top:605px;width:53px;height:54px;overflow:hidden;border-bottom:1px solid #b3b3b3">
<span class="t" style="left:11.77px;top:23.41px;font-size:25.5px;line-height:25.5px;color:#111;transform:scaleX(1.0600);">13</span>
</div>
<div class="a" style="left:0;top:659px;width:53px;height:54px;overflow:hidden;border-bottom:1px solid #b3b3b3">
<span class="t" style="left:11.77px;top:23.41px;font-size:25.5px;line-height:25.5px;color:#111;transform:scaleX(1.0600);">14</span>
</div>
<div class="a" style="left:0;top:713px;width:53px;height:54px;overflow:hidden;border-bottom:1px solid #b3b3b3">
<span class="t" style="left:11.77px;top:23.41px;font-size:25.5px;line-height:25.5px;color:#111;transform:scaleX(1.0600);">15</span>
</div>
<div class="a" style="left:0;top:767px;width:53px;height:54px;overflow:hidden;border-bottom:1px solid #b3b3b3">
<span class="t" style="left:11.77px;top:23.41px;font-size:25.5px;line-height:25.5px;color:#111;transform:scaleX(1.0600);">16</span>
</div>
<div class="a" style="left:0;top:821px;width:53px;height:54px;overflow:hidden;border-bottom:1px solid #b3b3b3">
<span class="t" style="left:11.77px;top:23.41px;font-size:25.5px;line-height:25.5px;color:#111;transform:scaleX(1.0600);">17</span>
</div>
<div class="a" style="left:0;top:875px;width:53px;height:54px;overflow:hidden;border-bottom:1px solid #b3b3b3">
<span class="t" style="left:11.77px;top:23.41px;font-size:25.5px;line-height:25.5px;color:#111;transform:scaleX(1.0600);">18</span>
</div>
<div class="a" style="left:0;top:929px;width:53px;height:39px;overflow:hidden;border-bottom:1px solid #b3b3b3">
<span class="t" style="left:11.77px;top:8.81px;font-size:25.5px;line-height:25.5px;color:#111;transform:scaleX(1.0600);">19</span>
</div>
<div class="a" style="left:0;top:968px;width:53px;height:38px;overflow:hidden;border-bottom:1px solid #b3b3b3">
<span class="t" style="left:11.77px;top:7.81px;font-size:25.5px;line-height:25.5px;color:#111;transform:scaleX(1.0600);">20</span>
</div>
<div class="a" style="left:0;top:1006px;width:53px;height:38px;overflow:hidden;border-bottom:1px solid #b3b3b3">
<span class="t" style="left:11.77px;top:7.81px;font-size:25.5px;line-height:25.5px;color:#111;transform:scaleX(1.0600);">21</span>
</div>
<div class="a" style="left:0;top:1044px;width:53px;height:38px;overflow:hidden;border-bottom:1px solid #b3b3b3">
<span class="t" style="left:11.77px;top:7.81px;font-size:25.5px;line-height:25.5px;color:#111;transform:scaleX(1.0600);">22</span>
</div>
<div class="a" style="left:0;top:1082px;width:53px;height:38px;overflow:hidden;border-bottom:1px solid #b3b3b3">
<span class="t" style="left:11.77px;top:7.81px;font-size:25.5px;line-height:25.5px;color:#111;transform:scaleX(1.0600);">23</span>
</div>
<div class="a" style="left:0;top:1120px;width:53px;height:38px;overflow:hidden;border-bottom:1px solid #b3b3b3">
<span class="t" style="left:11.77px;top:7.81px;font-size:25.5px;line-height:25.5px;color:#111;transform:scaleX(1.0600);">24</span>
</div>
<div class="a" style="left:0;top:1158px;width:53px;height:38px;overflow:hidden;border-bottom:1px solid #b3b3b3">
<span class="t" style="left:11.77px;top:7.81px;font-size:25.5px;line-height:25.5px;color:#111;transform:scaleX(1.0600);">25</span>
</div>
<div class="a" style="left:0;top:1196px;width:53px;height:38px;overflow:hidden;border-bottom:1px solid #b3b3b3">
<span class="t" style="left:11.77px;top:7.81px;font-size:25.5px;line-height:25.5px;color:#111;transform:scaleX(1.0600);">26</span>
</div>
<div class="a" style="left:0;top:1234px;width:53px;height:38px;overflow:hidden;border-bottom:1px solid #b3b3b3">
<span class="t" style="left:11.77px;top:7.81px;font-size:25.5px;line-height:25.5px;color:#111;transform:scaleX(1.0600);">27</span>
</div>
<div class="a" style="left:0;top:1272px;width:53px;height:38px;overflow:hidden;border-bottom:1px solid #b3b3b3">
<span class="t" style="left:11.77px;top:7.81px;font-size:25.5px;line-height:25.5px;color:#111;transform:scaleX(1.0600);">28</span>
</div>
<div class="a" style="left:0;top:1310px;width:53px;height:38px;overflow:hidden;border-bottom:1px solid #b3b3b3">
<span class="t" style="left:11.77px;top:7.81px;font-size:25.5px;line-height:25.5px;color:#111;transform:scaleX(1.0600);">29</span>
</div>
<div class="a" style="left:0;top:1348px;width:53px;height:38px;overflow:hidden;border-bottom:1px solid #b3b3b3">
<span class="t" style="left:11.77px;top:7.81px;font-size:25.5px;line-height:25.5px;color:#111;transform:scaleX(1.0600);">30</span>
</div>
</div>
<!-- p5_sheet -->
<div class="a" id="sheet" style="left:54px;top:456px;width:2907px;height:1357px;background:#fff;overflow:hidden"></div>
<div class="a " style="left:54px;top:456px;width:2907px;height:94px;background:#404040;"></div>
<div class="a " style="left:1012px;top:456px;width:232px;height:94px;background:#6699cc;"></div>
<div class="a " style="left:54px;top:549px;width:2907px;height:73px;background:#6699cc;"></div>
<div class="a " style="left:308px;top:548px;width:235px;height:2px;background:#3a3a3a;"></div>
<div class="a " style="left:544px;top:548px;width:234px;height:2px;background:#3a3a3a;"></div>
<div class="a " style="left:1244px;top:548px;width:235px;height:2px;background:#3a3a3a;"></div>
<div class="a " style="left:1482px;top:548px;width:234px;height:2px;background:#3a3a3a;"></div>
<div class="a " style="left:54px;top:621px;width:2907px;height:2px;background:#9c9c9c;"></div>
<div class="a " style="left:0px;top:621px;width:54px;height:2px;background:#9c9c9c;"></div>
<div class="a" style="left:51px;top:453px;width:36px;height:99px;border:3px solid #217346;box-shadow:inset 0 0 0 1px #fff"></div>
<div class="a" style="left:79px;top:544px;width:9px;height:9px;background:#217346;border:1px solid #fff;border-right:0;border-bottom:0"></div>
<svg class="a" style="left:76px;top:478px;" width="38" height="52" viewBox="0 0 38 52"><path d="M3.7 13 V10.5 Q3.7 3.5 12 3.5 H25 Q33.6 3.5 33.6 11 V13" fill="none" stroke="#fff" stroke-width="3.4" stroke-linecap="round"/>
<path d="M3.7 18 V30 Q3.7 39.3 13 39.3 H24 Q33.6 39.3 33.6 30 V18" fill="none" stroke="#fff" stroke-width="3.4" stroke-linecap="round"/>
<rect x="12.9" y="43.3" width="11.9" height="2.4" rx="0.6" fill="#fff"/><path d="M14 46.8 H23.9 Q22 50.2 19 50.2 Q16 50.2 14 46.8Z" fill="#fff"/></svg>
<span class="t" style="left:120.1px;top:487.72px;font-size:27.5px;line-height:27.5px;color:#fff;font-weight:700;transform:scaleX(0.8736);">LUZ</span>
<div class="a " style="left:176px;top:487px;width:1px;height:29px;background:#d9d9d9;"></div>
<span class="t" style="left:185.6px;top:490.67px;font-size:11.5px;line-height:11.5px;color:#efefef;transform:scaleX(0.9429);">Planilhas</span>
<span class="t" style="left:185.6px;top:502.07px;font-size:11.5px;line-height:11.5px;color:#efefef;transform:scaleX(0.9597);">Empresariais</span>
<span class="t" style="left:362.3px;top:476.18px;font-size:22px;line-height:22px;color:#fff;transform:scaleX(0.9514);">GRUPOS DE</span>
<span class="t" style="left:381.2px;top:508.18px;font-size:22px;line-height:22px;color:#fff;transform:scaleX(0.9751);">CONTAS</span>
<span class="t" style="left:578.2px;top:493.18px;font-size:22px;line-height:22px;color:#fff;transform:scaleX(0.9948);">LANÇAMENTOS</span>
<span class="t" style="left:833.9px;top:476.18px;font-size:22px;line-height:22px;color:#fff;font-weight:700;transform:scaleX(0.9624);">CONTROLE</span>
<span class="t" style="left:826.4px;top:508.18px;font-size:22px;line-height:22px;color:#fff;font-weight:700;transform:scaleX(0.9833);">FINANCEIRO</span>
<span class="t" style="left:1061px;top:493.18px;font-size:22px;line-height:22px;color:#fff;font-weight:700;transform:scaleX(0.9630);">RELATÓRIOS</span>
<span class="t" style="left:1287.9px;top:493.18px;font-size:22px;line-height:22px;color:#fff;transform:scaleX(0.9614);">DASHBOARDS</span>
<span class="t" style="left:1531.4px;top:493.18px;font-size:22px;line-height:22px;color:#fff;transform:scaleX(0.9367);">INSTRUÇÕES</span>
<div class="a" style="left:86.5px;top:555.5px;width:61px;height:60px;background:#fff;border-radius:7px;box-shadow:0 0 1.5px rgba(255,255,255,.8)"></div>
<svg class="a" style="left:98px;top:567px;" width="38" height="38" viewBox="0 0 38 38"><circle cx="19" cy="18.6" r="16.2" fill="none" stroke="#e9262b" stroke-width="4.2"/><path d="M13.5 9.8 L28 18.3 L13.5 27Z" fill="#e9262b"/></svg>
<div class="a " style="left:1250px;top:564px;width:280px;height:56px;background:#fff;"></div>
<span class="t" style="left:292.9px;top:583.58px;font-size:22px;line-height:22px;color:#fff;font-weight:700;transform:scaleX(0.9832);word-spacing:-1px;">FLUXO DE CAIXA</span>
<span class="t" style="left:579px;top:582.38px;font-size:22px;line-height:22px;color:#fff;font-weight:700;transform:scaleX(1.0163);">METAS</span>
<span class="t" style="left:783.3px;top:584.58px;font-size:22px;line-height:22px;color:#fff;font-weight:700;transform:scaleX(0.9796);">RESULTADO</span>
<span class="t" style="left:985.3px;top:583.58px;font-size:22px;line-height:22px;color:#fff;font-weight:700;transform:scaleX(0.9943);word-spacing:-1px;">RESULTADOS POR DIA</span>
<span class="t" style="left:1271px;top:582.58px;font-size:22px;line-height:22px;color:#404040;font-weight:700;transform:scaleX(0.9908);word-spacing:-1px;">VALORES EM ABERTO</span>
<span class="t" style="left:1556.5px;top:582.58px;font-size:22px;line-height:22px;color:#fff;font-weight:700;transform:scaleX(0.9882);word-spacing:-1.2px;">CONTAS A PAGAR E A  RECEBER</span>
<span class="t" style="left:1990.4px;top:581.28px;font-size:22px;line-height:22px;color:#fff;font-weight:700;transform:scaleX(0.9756);">IMPRESSÃO</span>
<span class="t" style="left:109.6px;top:663.08px;font-size:24px;line-height:24px;color:#000;transform:scaleX(0.9636);">Selecione o mês:</span>
<div class="a" style="left:313px;top:646px;width:316px;height:55px;background:#fff;border:1px solid #7a7f89"></div>
<div class="a" style="left:575px;top:647px;width:53px;height:53px;background:#e1e1e1;border:1px solid #adadad"></div>
<svg class="a" style="left:589px;top:668px;" width="25" height="13" viewBox="0 0 25 13"><path d="M0 0H25L12.5 13Z" fill="#000"/></svg>
<span class="t" style="left:318.4px;top:664.89px;font-size:19.5px;line-height:19.5px;color:#000;transform:scaleX(0.9892);">Abril</span>
<div class="a " style="left:898px;top:644px;width:312px;height:59px;background:#d9d9d9;"></div>
<div class="a " style="left:1213px;top:644px;width:1243px;height:59px;background:#f2f2f2;"></div>
<span class="t" style="left:922.2px;top:663.31px;font-size:23.5px;line-height:23.5px;color:#404040;font-weight:700;transform:scaleX(0.9532);">Análise da Inadimplência</span>
<span class="t" style="left:1236px;top:663.11px;font-size:23.5px;line-height:23.5px;color:#404040;word-spacing:-0.8px;">1 despesa ainda não foi paga em Abril totalizando 7,2% das suas despesas nesse mês.</span>
<div class="a " style="left:106px;top:733px;width:85px;height:56px;background:#d9d9d9;"></div>
<span class="t" style="left:128.6px;top:750.51px;font-size:23.5px;line-height:23.5px;color:#404040;font-weight:700;transform:scaleX(0.9093);">Dia</span>
<div class="a " style="left:194px;top:733px;width:222px;height:56px;background:#d9d9d9;"></div>
<span class="t" style="left:216.6px;top:750.51px;font-size:23.5px;line-height:23.5px;color:#404040;font-weight:700;transform:scaleX(0.9361);">Receita</span>
<div class="a " style="left:419px;top:733px;width:222px;height:56px;background:#d9d9d9;"></div>
<span class="t" style="left:441.6px;top:750.51px;font-size:23.5px;line-height:23.5px;color:#404040;font-weight:700;transform:scaleX(0.8984);">Despesa</span>
<div class="a " style="left:644px;top:733px;width:222px;height:56px;background:#d9d9d9;"></div>
<span class="t" style="left:666.6px;top:750.51px;font-size:23.5px;line-height:23.5px;color:#404040;font-weight:700;transform:scaleX(0.9447);">Resultado do dia</span>
<div class="a " style="left:106px;top:792px;width:85px;height:51px;background:#d9d9d9;"></div>
<span class="t" style="left:129.4px;top:807.61px;font-size:23.5px;line-height:23.5px;color:#404040;font-weight:700;transform:scaleX(0.9444);">1</span>
<div class="a " style="left:194px;top:792px;width:222px;height:51px;background:#f2f2f2;"></div>
<span class="t" style="left:217px;top:808.03px;font-size:23px;line-height:23px;color:#000;transform:scaleX(0.9510);">R$ 0,00</span>
<div class="a " style="left:419px;top:792px;width:222px;height:51px;background:#f2f2f2;"></div>
<span class="t" style="left:442px;top:808.03px;font-size:23px;line-height:23px;color:#000;transform:scaleX(0.9510);">R$ 0,00</span>
<div class="a " style="left:644px;top:792px;width:222px;height:51px;background:#f2f2f2;"></div>
<span class="t" style="left:667px;top:808.03px;font-size:23px;line-height:23px;color:#000;transform:scaleX(0.9510);">R$ 0,00</span>
<div class="a " style="left:106px;top:846px;width:85px;height:51px;background:#d9d9d9;"></div>
<span class="t" style="left:129.4px;top:861.61px;font-size:23.5px;line-height:23.5px;color:#404040;font-weight:700;transform:scaleX(0.9444);">2</span>
<div class="a " style="left:194px;top:846px;width:222px;height:51px;background:#f2f2f2;"></div>
<span class="t" style="left:217px;top:862.03px;font-size:23px;line-height:23px;color:#000;transform:scaleX(0.9510);">R$ 0,00</span>
<div class="a " style="left:419px;top:846px;width:222px;height:51px;background:#f2f2f2;"></div>
<span class="t" style="left:442px;top:862.03px;font-size:23px;line-height:23px;color:#000;transform:scaleX(0.9510);">R$ 0,00</span>
<div class="a " style="left:644px;top:846px;width:222px;height:51px;background:#f2f2f2;"></div>
<span class="t" style="left:667px;top:862.03px;font-size:23px;line-height:23px;color:#000;transform:scaleX(0.9510);">R$ 0,00</span>
<div class="a " style="left:106px;top:900px;width:85px;height:51px;background:#d9d9d9;"></div>
<span class="t" style="left:129.4px;top:915.61px;font-size:23.5px;line-height:23.5px;color:#404040;font-weight:700;transform:scaleX(0.9444);">3</span>
<div class="a " style="left:194px;top:900px;width:222px;height:51px;background:#f2f2f2;"></div>
<span class="t" style="left:217px;top:916.03px;font-size:23px;line-height:23px;color:#000;transform:scaleX(0.9510);">R$ 0,00</span>
<div class="a " style="left:419px;top:900px;width:222px;height:51px;background:#f2f2f2;"></div>
<span class="t" style="left:442px;top:916.03px;font-size:23px;line-height:23px;color:#000;transform:scaleX(0.9510);">R$ 0,00</span>
<div class="a " style="left:644px;top:900px;width:222px;height:51px;background:#f2f2f2;"></div>
<span class="t" style="left:667px;top:916.03px;font-size:23px;line-height:23px;color:#000;transform:scaleX(0.9510);">R$ 0,00</span>
<div class="a " style="left:106px;top:954px;width:85px;height:51px;background:#d9d9d9;"></div>
<span class="t" style="left:129.4px;top:969.61px;font-size:23.5px;line-height:23.5px;color:#404040;font-weight:700;transform:scaleX(0.9444);">4</span>
<div class="a " style="left:194px;top:954px;width:222px;height:51px;background:#f2f2f2;"></div>
<span class="t" style="left:217px;top:970.03px;font-size:23px;line-height:23px;color:#000;transform:scaleX(0.9510);">R$ 0,00</span>
<div class="a " style="left:419px;top:954px;width:222px;height:51px;background:#f2f2f2;"></div>
<span class="t" style="left:442px;top:970.03px;font-size:23px;line-height:23px;color:#000;transform:scaleX(0.9510);">R$ 0,00</span>
<div class="a " style="left:644px;top:954px;width:222px;height:51px;background:#f2f2f2;"></div>
<span class="t" style="left:667px;top:970.03px;font-size:23px;line-height:23px;color:#000;transform:scaleX(0.9510);">R$ 0,00</span>
<div class="a " style="left:106px;top:1008px;width:85px;height:51px;background:#d9d9d9;"></div>
<span class="t" style="left:129.4px;top:1023.61px;font-size:23.5px;line-height:23.5px;color:#404040;font-weight:700;transform:scaleX(0.9444);">5</span>
<div class="a " style="left:194px;top:1008px;width:222px;height:51px;background:#f2f2f2;"></div>
<span class="t" style="left:217px;top:1024.03px;font-size:23px;line-height:23px;color:#000;transform:scaleX(0.9510);">R$ 0,00</span>
<div class="a " style="left:419px;top:1008px;width:222px;height:51px;background:#f2f2f2;"></div>
<span class="t" style="left:442px;top:1024.03px;font-size:23px;line-height:23px;color:#000;transform:scaleX(0.9510);">R$ 0,00</span>
<div class="a " style="left:644px;top:1008px;width:222px;height:51px;background:#f2f2f2;"></div>
<span class="t" style="left:667px;top:1024.03px;font-size:23px;line-height:23px;color:#000;transform:scaleX(0.9510);">R$ 0,00</span>
<div class="a " style="left:106px;top:1062px;width:85px;height:51px;background:#d9d9d9;"></div>
<span class="t" style="left:129.4px;top:1077.61px;font-size:23.5px;line-height:23.5px;color:#404040;font-weight:700;transform:scaleX(0.9444);">6</span>
<div class="a " style="left:194px;top:1062px;width:222px;height:51px;background:#f2f2f2;"></div>
<span class="t" style="left:217px;top:1078.03px;font-size:23px;line-height:23px;color:#000;transform:scaleX(0.9510);">R$ 0,00</span>
<div class="a " style="left:419px;top:1062px;width:222px;height:51px;background:#f2f2f2;"></div>
<span class="t" style="left:442px;top:1078.03px;font-size:23px;line-height:23px;color:#000;transform:scaleX(0.9510);">R$ 0,00</span>
<div class="a " style="left:644px;top:1062px;width:222px;height:51px;background:#f2f2f2;"></div>
<span class="t" style="left:667px;top:1078.03px;font-size:23px;line-height:23px;color:#000;transform:scaleX(0.9510);">R$ 0,00</span>
<div class="a " style="left:106px;top:1116px;width:85px;height:51px;background:#d9d9d9;"></div>
<span class="t" style="left:129.4px;top:1131.61px;font-size:23.5px;line-height:23.5px;color:#404040;font-weight:700;transform:scaleX(0.9444);">7</span>
<div class="a " style="left:194px;top:1116px;width:222px;height:51px;background:#f2f2f2;"></div>
<span class="t" style="left:217px;top:1132.03px;font-size:23px;line-height:23px;color:#000;transform:scaleX(0.9510);">R$ 0,00</span>
<div class="a " style="left:419px;top:1116px;width:222px;height:51px;background:#f2f2f2;"></div>
<span class="t" style="left:442px;top:1132.03px;font-size:23px;line-height:23px;color:#000;transform:scaleX(0.9510);">R$ 0,00</span>
<div class="a " style="left:644px;top:1116px;width:222px;height:51px;background:#f2f2f2;"></div>
<span class="t" style="left:667px;top:1132.03px;font-size:23px;line-height:23px;color:#000;transform:scaleX(0.9510);">R$ 0,00</span>
<div class="a " style="left:106px;top:1170px;width:85px;height:51px;background:#d9d9d9;"></div>
<span class="t" style="left:129.4px;top:1185.61px;font-size:23.5px;line-height:23.5px;color:#404040;font-weight:700;transform:scaleX(0.9444);">8</span>
<div class="a " style="left:194px;top:1170px;width:222px;height:51px;background:#f2f2f2;"></div>
<span class="t" style="left:217px;top:1186.03px;font-size:23px;line-height:23px;color:#000;transform:scaleX(0.9510);">R$ 0,00</span>
<div class="a " style="left:419px;top:1170px;width:222px;height:51px;background:#f2f2f2;"></div>
<span class="t" style="left:442px;top:1186.03px;font-size:23px;line-height:23px;color:#000;transform:scaleX(0.9510);">R$ 0,00</span>
<div class="a " style="left:644px;top:1170px;width:222px;height:51px;background:#f2f2f2;"></div>
<span class="t" style="left:667px;top:1186.03px;font-size:23px;line-height:23px;color:#000;transform:scaleX(0.9510);">R$ 0,00</span>
<div class="a " style="left:106px;top:1224px;width:85px;height:51px;background:#d9d9d9;"></div>
<span class="t" style="left:129.4px;top:1239.61px;font-size:23.5px;line-height:23.5px;color:#404040;font-weight:700;transform:scaleX(0.9444);">9</span>
<div class="a " style="left:194px;top:1224px;width:222px;height:51px;background:#f2f2f2;"></div>
<span class="t" style="left:217px;top:1240.03px;font-size:23px;line-height:23px;color:#000;transform:scaleX(0.9510);">R$ 0,00</span>
<div class="a " style="left:419px;top:1224px;width:222px;height:51px;background:#f2f2f2;"></div>
<span class="t" style="left:442px;top:1240.03px;font-size:23px;line-height:23px;color:#000;transform:scaleX(0.9510);">R$ 0,00</span>
<div class="a " style="left:644px;top:1224px;width:222px;height:51px;background:#f2f2f2;"></div>
<span class="t" style="left:667px;top:1240.03px;font-size:23px;line-height:23px;color:#000;transform:scaleX(0.9510);">R$ 0,00</span>
<div class="a " style="left:106px;top:1278px;width:85px;height:51px;background:#d9d9d9;"></div>
<span class="t" style="left:129.4px;top:1293.61px;font-size:23.5px;line-height:23.5px;color:#404040;font-weight:700;transform:scaleX(0.9597);">10</span>
<div class="a " style="left:194px;top:1278px;width:222px;height:51px;background:#f2f2f2;"></div>
<span class="t" style="left:217px;top:1294.03px;font-size:23px;line-height:23px;color:#000;transform:scaleX(0.9510);">R$ 0,00</span>
<div class="a " style="left:419px;top:1278px;width:222px;height:51px;background:#f2f2f2;"></div>
<span class="t" style="left:442px;top:1294.03px;font-size:23px;line-height:23px;color:#000;transform:scaleX(0.9510);">R$ 0,00</span>
<div class="a " style="left:644px;top:1278px;width:222px;height:51px;background:#f2f2f2;"></div>
<span class="t" style="left:667px;top:1294.03px;font-size:23px;line-height:23px;color:#000;transform:scaleX(0.9510);">R$ 0,00</span>
<div class="a " style="left:106px;top:1332px;width:85px;height:51px;background:#d9d9d9;"></div>
<span class="t" style="left:129.4px;top:1347.61px;font-size:23.5px;line-height:23.5px;color:#404040;font-weight:700;transform:scaleX(0.9589);">11</span>
<div class="a " style="left:194px;top:1332px;width:222px;height:51px;background:#f2f2f2;"></div>
<span class="t" style="left:217px;top:1348.03px;font-size:23px;line-height:23px;color:#000;transform:scaleX(0.9510);">R$ 0,00</span>
<div class="a " style="left:419px;top:1332px;width:222px;height:51px;background:#f2f2f2;"></div>
<span class="t" style="left:442px;top:1348.03px;font-size:23px;line-height:23px;color:#000;transform:scaleX(0.9510);">R$ 0,00</span>
<div class="a " style="left:644px;top:1332px;width:222px;height:51px;background:#f2f2f2;"></div>
<span class="t" style="left:667px;top:1348.03px;font-size:23px;line-height:23px;color:#000;transform:scaleX(0.9510);">R$ 0,00</span>
<div class="a " style="left:900px;top:733px;width:85px;height:56px;background:#d9d9d9;"></div>
<span class="t" style="left:922.6px;top:750.51px;font-size:23.5px;line-height:23.5px;color:#404040;font-weight:700;transform:scaleX(0.9093);">Dia</span>
<div class="a " style="left:988px;top:733px;width:222px;height:56px;background:#d9d9d9;"></div>
<span class="t" style="left:1010.6px;top:750.51px;font-size:23.5px;line-height:23.5px;color:#404040;font-weight:700;transform:scaleX(0.9361);">Receita</span>
<div class="a " style="left:1213px;top:733px;width:222px;height:56px;background:#d9d9d9;"></div>
<span class="t" style="left:1235.6px;top:750.51px;font-size:23.5px;line-height:23.5px;color:#404040;font-weight:700;transform:scaleX(0.8984);">Despesa</span>
<div class="a " style="left:1438px;top:733px;width:222px;height:56px;background:#d9d9d9;"></div>
<span class="t" style="left:1460.6px;top:750.51px;font-size:23.5px;line-height:23.5px;color:#404040;font-weight:700;transform:scaleX(0.9447);">Resultado do dia</span>
<div class="a " style="left:900px;top:792px;width:85px;height:51px;background:#d9d9d9;"></div>
<span class="t" style="left:923.4px;top:807.61px;font-size:23.5px;line-height:23.5px;color:#404040;font-weight:700;transform:scaleX(0.9597);">12</span>
<div class="a " style="left:988px;top:792px;width:222px;height:51px;background:#f2f2f2;"></div>
<span class="t" style="left:1011px;top:808.03px;font-size:23px;line-height:23px;color:#000;transform:scaleX(0.9510);">R$ 0,00</span>
<div class="a " style="left:1213px;top:792px;width:222px;height:51px;background:#f2f2f2;"></div>
<span class="t" style="left:1236px;top:808.03px;font-size:23px;line-height:23px;color:#000;transform:scaleX(0.9510);">R$ 0,00</span>
<div class="a " style="left:1438px;top:792px;width:222px;height:51px;background:#f2f2f2;"></div>
<span class="t" style="left:1461px;top:808.03px;font-size:23px;line-height:23px;color:#000;transform:scaleX(0.9510);">R$ 0,00</span>
<div class="a " style="left:900px;top:846px;width:85px;height:51px;background:#d9d9d9;"></div>
<span class="t" style="left:923.4px;top:861.61px;font-size:23.5px;line-height:23.5px;color:#404040;font-weight:700;transform:scaleX(0.9597);">13</span>
<div class="a " style="left:988px;top:846px;width:222px;height:51px;background:#f2f2f2;"></div>
<span class="t" style="left:1011px;top:862.03px;font-size:23px;line-height:23px;color:#000;transform:scaleX(0.9510);">R$ 0,00</span>
<div class="a " style="left:1213px;top:846px;width:222px;height:51px;background:#f2f2f2;"></div>
<span class="t" style="left:1236px;top:862.03px;font-size:23px;line-height:23px;color:#000;transform:scaleX(0.9510);">R$ 0,00</span>
<div class="a " style="left:1438px;top:846px;width:222px;height:51px;background:#f2f2f2;"></div>
<span class="t" style="left:1461px;top:862.03px;font-size:23px;line-height:23px;color:#000;transform:scaleX(0.9510);">R$ 0,00</span>
<div class="a " style="left:900px;top:900px;width:85px;height:51px;background:#d9d9d9;"></div>
<span class="t" style="left:923.4px;top:915.61px;font-size:23.5px;line-height:23.5px;color:#404040;font-weight:700;transform:scaleX(0.9597);">14</span>
<div class="a " style="left:988px;top:900px;width:222px;height:51px;background:#f2f2f2;"></div>
<span class="t" style="left:1011px;top:916.03px;font-size:23px;line-height:23px;color:#000;transform:scaleX(0.9510);">R$ 0,00</span>
<div class="a " style="left:1213px;top:900px;width:222px;height:51px;background:#f2f2f2;"></div>
<span class="t" style="left:1236px;top:916.03px;font-size:23px;line-height:23px;color:#000;transform:scaleX(0.9510);">R$ 0,00</span>
<div class="a " style="left:1438px;top:900px;width:222px;height:51px;background:#f2f2f2;"></div>
<span class="t" style="left:1461px;top:916.03px;font-size:23px;line-height:23px;color:#000;transform:scaleX(0.9510);">R$ 0,00</span>
<div class="a " style="left:900px;top:954px;width:85px;height:51px;background:#d9d9d9;"></div>
<span class="t" style="left:923.4px;top:969.61px;font-size:23.5px;line-height:23.5px;color:#404040;font-weight:700;transform:scaleX(0.9597);">15</span>
<div class="a " style="left:988px;top:954px;width:222px;height:51px;background:#f2f2f2;"></div>
<span class="t" style="left:1011px;top:970.03px;font-size:23px;line-height:23px;color:#000;transform:scaleX(0.9510);">R$ 0,00</span>
<div class="a " style="left:1213px;top:954px;width:222px;height:51px;background:#f2f2f2;"></div>
<span class="t" style="left:1236px;top:970.03px;font-size:23px;line-height:23px;color:#000;transform:scaleX(0.9510);">R$ 0,00</span>
<div class="a " style="left:1438px;top:954px;width:222px;height:51px;background:#f2f2f2;"></div>
<span class="t" style="left:1461px;top:970.03px;font-size:23px;line-height:23px;color:#000;transform:scaleX(0.9510);">R$ 0,00</span>
<div class="a " style="left:900px;top:1008px;width:85px;height:51px;background:#d9d9d9;"></div>
<span class="t" style="left:923.4px;top:1023.61px;font-size:23.5px;line-height:23.5px;color:#404040;font-weight:700;transform:scaleX(0.9597);">16</span>
<div class="a " style="left:988px;top:1008px;width:222px;height:51px;background:#f2f2f2;"></div>
<span class="t" style="left:1011px;top:1024.03px;font-size:23px;line-height:23px;color:#000;transform:scaleX(0.9510);">R$ 0,00</span>
<div class="a " style="left:1213px;top:1008px;width:222px;height:51px;background:#f2f2f2;"></div>
<span class="t" style="left:1236px;top:1024.03px;font-size:23px;line-height:23px;color:#000;transform:scaleX(0.9510);">R$ 0,00</span>
<div class="a " style="left:1438px;top:1008px;width:222px;height:51px;background:#f2f2f2;"></div>
<span class="t" style="left:1461px;top:1024.03px;font-size:23px;line-height:23px;color:#000;transform:scaleX(0.9510);">R$ 0,00</span>
<div class="a " style="left:900px;top:1062px;width:85px;height:51px;background:#d9d9d9;"></div>
<span class="t" style="left:923.4px;top:1077.61px;font-size:23.5px;line-height:23.5px;color:#404040;font-weight:700;transform:scaleX(0.9597);">17</span>
<div class="a " style="left:988px;top:1062px;width:222px;height:51px;background:#f2f2f2;"></div>
<span class="t" style="left:1011px;top:1078.03px;font-size:23px;line-height:23px;color:#000;transform:scaleX(0.9510);">R$ 0,00</span>
<div class="a " style="left:1213px;top:1062px;width:222px;height:51px;background:#f2f2f2;"></div>
<span class="t" style="left:1236px;top:1078.03px;font-size:23px;line-height:23px;color:#000;transform:scaleX(0.9510);">R$ 0,00</span>
<div class="a " style="left:1438px;top:1062px;width:222px;height:51px;background:#f2f2f2;"></div>
<span class="t" style="left:1461px;top:1078.03px;font-size:23px;line-height:23px;color:#000;transform:scaleX(0.9510);">R$ 0,00</span>
<div class="a " style="left:900px;top:1116px;width:85px;height:51px;background:#d9d9d9;"></div>
<span class="t" style="left:923.4px;top:1131.61px;font-size:23.5px;line-height:23.5px;color:#404040;font-weight:700;transform:scaleX(0.9597);">18</span>
<div class="a " style="left:988px;top:1116px;width:222px;height:51px;background:#f2f2f2;"></div>
<span class="t" style="left:1011px;top:1132.03px;font-size:23px;line-height:23px;color:#000;transform:scaleX(0.9510);">R$ 0,00</span>
<div class="a " style="left:1213px;top:1116px;width:222px;height:51px;background:#f2f2f2;"></div>
<span class="t" style="left:1236px;top:1132.03px;font-size:23px;line-height:23px;color:#000;transform:scaleX(0.9814);">R$ 1.500,00</span>
<div class="a " style="left:1438px;top:1116px;width:222px;height:51px;background:#f04830;"></div>
<span class="t" style="left:1461px;top:1132.03px;font-size:23px;line-height:23px;color:#fff;transform:scaleX(0.9813);">-R$ 1.500,00</span>
<div class="a " style="left:900px;top:1170px;width:85px;height:51px;background:#d9d9d9;"></div>
<span class="t" style="left:923.4px;top:1185.61px;font-size:23.5px;line-height:23.5px;color:#404040;font-weight:700;transform:scaleX(0.9597);">19</span>
<div class="a " style="left:988px;top:1170px;width:222px;height:51px;background:#f2f2f2;"></div>
<span class="t" style="left:1011px;top:1186.03px;font-size:23px;line-height:23px;color:#000;transform:scaleX(0.9510);">R$ 0,00</span>
<div class="a " style="left:1213px;top:1170px;width:222px;height:51px;background:#f2f2f2;"></div>
<span class="t" style="left:1236px;top:1186.03px;font-size:23px;line-height:23px;color:#000;transform:scaleX(0.9510);">R$ 0,00</span>
<div class="a " style="left:1438px;top:1170px;width:222px;height:51px;background:#f2f2f2;"></div>
<span class="t" style="left:1461px;top:1186.03px;font-size:23px;line-height:23px;color:#000;transform:scaleX(0.9510);">R$ 0,00</span>
<div class="a " style="left:900px;top:1224px;width:85px;height:51px;background:#d9d9d9;"></div>
<span class="t" style="left:923.4px;top:1239.61px;font-size:23.5px;line-height:23.5px;color:#404040;font-weight:700;transform:scaleX(0.9597);">20</span>
<div class="a " style="left:988px;top:1224px;width:222px;height:51px;background:#f2f2f2;"></div>
<span class="t" style="left:1011px;top:1240.03px;font-size:23px;line-height:23px;color:#000;transform:scaleX(0.9814);">R$ 7.500,00</span>
<div class="a " style="left:1213px;top:1224px;width:222px;height:51px;background:#f2f2f2;"></div>
<span class="t" style="left:1236px;top:1240.03px;font-size:23px;line-height:23px;color:#000;transform:scaleX(0.9510);">R$ 0,00</span>
<div class="a " style="left:1438px;top:1224px;width:222px;height:51px;background:#54ae3c;"></div>
<span class="t" style="left:1461px;top:1240.03px;font-size:23px;line-height:23px;color:#fff;transform:scaleX(0.9814);">R$ 7.500,00</span>
<div class="a " style="left:900px;top:1278px;width:85px;height:51px;background:#d9d9d9;"></div>
<span class="t" style="left:923.4px;top:1293.61px;font-size:23.5px;line-height:23.5px;color:#404040;font-weight:700;transform:scaleX(0.9597);">21</span>
<div class="a " style="left:988px;top:1278px;width:222px;height:51px;background:#f2f2f2;"></div>
<span class="t" style="left:1011px;top:1294.03px;font-size:23px;line-height:23px;color:#000;transform:scaleX(0.9510);">R$ 0,00</span>
<div class="a " style="left:1213px;top:1278px;width:222px;height:51px;background:#f2f2f2;"></div>
<span class="t" style="left:1236px;top:1294.03px;font-size:23px;line-height:23px;color:#000;transform:scaleX(0.9510);">R$ 0,00</span>
<div class="a " style="left:1438px;top:1278px;width:222px;height:51px;background:#f2f2f2;"></div>
<span class="t" style="left:1461px;top:1294.03px;font-size:23px;line-height:23px;color:#000;transform:scaleX(0.9510);">R$ 0,00</span>
<div class="a " style="left:900px;top:1332px;width:85px;height:51px;background:#d9d9d9;"></div>
<span class="t" style="left:923.4px;top:1347.61px;font-size:23.5px;line-height:23.5px;color:#404040;font-weight:700;transform:scaleX(0.9597);">22</span>
<div class="a " style="left:988px;top:1332px;width:222px;height:51px;background:#f2f2f2;"></div>
<span class="t" style="left:1011px;top:1348.03px;font-size:23px;line-height:23px;color:#000;transform:scaleX(0.9510);">R$ 0,00</span>
<div class="a " style="left:1213px;top:1332px;width:222px;height:51px;background:#f2f2f2;"></div>
<span class="t" style="left:1236px;top:1348.03px;font-size:23px;line-height:23px;color:#000;transform:scaleX(0.9510);">R$ 0,00</span>
<div class="a " style="left:1438px;top:1332px;width:222px;height:51px;background:#f2f2f2;"></div>
<span class="t" style="left:1461px;top:1348.03px;font-size:23px;line-height:23px;color:#000;transform:scaleX(0.9510);">R$ 0,00</span>
<div class="a " style="left:1694px;top:733px;width:85px;height:56px;background:#d9d9d9;"></div>
<span class="t" style="left:1716.6px;top:750.51px;font-size:23.5px;line-height:23.5px;color:#404040;font-weight:700;transform:scaleX(0.9093);">Dia</span>
<div class="a " style="left:1782px;top:733px;width:222px;height:56px;background:#d9d9d9;"></div>
<span class="t" style="left:1804.6px;top:750.51px;font-size:23.5px;line-height:23.5px;color:#404040;font-weight:700;transform:scaleX(0.9361);">Receita</span>
<div class="a " style="left:2007px;top:733px;width:222px;height:56px;background:#d9d9d9;"></div>
<span class="t" style="left:2029.6px;top:750.51px;font-size:23.5px;line-height:23.5px;color:#404040;font-weight:700;transform:scaleX(0.8984);">Despesa</span>
<div class="a " style="left:2232px;top:733px;width:222px;height:56px;background:#d9d9d9;"></div>
<span class="t" style="left:2254.6px;top:750.51px;font-size:23.5px;line-height:23.5px;color:#404040;font-weight:700;transform:scaleX(0.9447);">Resultado do dia</span>
<div class="a " style="left:1694px;top:792px;width:85px;height:51px;background:#d9d9d9;"></div>
<span class="t" style="left:1717.4px;top:807.61px;font-size:23.5px;line-height:23.5px;color:#404040;font-weight:700;transform:scaleX(0.9597);">23</span>
<div class="a " style="left:1782px;top:792px;width:222px;height:51px;background:#f2f2f2;"></div>
<span class="t" style="left:1805px;top:808.03px;font-size:23px;line-height:23px;color:#000;transform:scaleX(0.9510);">R$ 0,00</span>
<div class="a " style="left:2007px;top:792px;width:222px;height:51px;background:#f2f2f2;"></div>
<span class="t" style="left:2030px;top:808.03px;font-size:23px;line-height:23px;color:#000;transform:scaleX(0.9510);">R$ 0,00</span>
<div class="a " style="left:2232px;top:792px;width:222px;height:51px;background:#f2f2f2;"></div>
<span class="t" style="left:2255px;top:808.03px;font-size:23px;line-height:23px;color:#000;transform:scaleX(0.9510);">R$ 0,00</span>
<div class="a " style="left:1694px;top:846px;width:85px;height:51px;background:#d9d9d9;"></div>
<span class="t" style="left:1717.4px;top:861.61px;font-size:23.5px;line-height:23.5px;color:#404040;font-weight:700;transform:scaleX(0.9597);">24</span>
<div class="a " style="left:1782px;top:846px;width:222px;height:51px;background:#f2f2f2;"></div>
<span class="t" style="left:1805px;top:862.03px;font-size:23px;line-height:23px;color:#000;transform:scaleX(0.9510);">R$ 0,00</span>
<div class="a " style="left:2007px;top:846px;width:222px;height:51px;background:#f2f2f2;"></div>
<span class="t" style="left:2030px;top:862.03px;font-size:23px;line-height:23px;color:#000;transform:scaleX(0.9510);">R$ 0,00</span>
<div class="a " style="left:2232px;top:846px;width:222px;height:51px;background:#f2f2f2;"></div>
<span class="t" style="left:2255px;top:862.03px;font-size:23px;line-height:23px;color:#000;transform:scaleX(0.9510);">R$ 0,00</span>
<div class="a " style="left:1694px;top:900px;width:85px;height:51px;background:#d9d9d9;"></div>
<span class="t" style="left:1717.4px;top:915.61px;font-size:23.5px;line-height:23.5px;color:#404040;font-weight:700;transform:scaleX(0.9597);">25</span>
<div class="a " style="left:1782px;top:900px;width:222px;height:51px;background:#f2f2f2;"></div>
<span class="t" style="left:1805px;top:916.03px;font-size:23px;line-height:23px;color:#000;transform:scaleX(0.9510);">R$ 0,00</span>
<div class="a " style="left:2007px;top:900px;width:222px;height:51px;background:#f2f2f2;"></div>
<span class="t" style="left:2030px;top:916.03px;font-size:23px;line-height:23px;color:#000;transform:scaleX(0.9510);">R$ 0,00</span>
<div class="a " style="left:2232px;top:900px;width:222px;height:51px;background:#f2f2f2;"></div>
<span class="t" style="left:2255px;top:916.03px;font-size:23px;line-height:23px;color:#000;transform:scaleX(0.9510);">R$ 0,00</span>
<div class="a " style="left:1694px;top:954px;width:85px;height:51px;background:#d9d9d9;"></div>
<span class="t" style="left:1717.4px;top:969.61px;font-size:23.5px;line-height:23.5px;color:#404040;font-weight:700;transform:scaleX(0.9597);">26</span>
<div class="a " style="left:1782px;top:954px;width:222px;height:51px;background:#f2f2f2;"></div>
<span class="t" style="left:1805px;top:970.03px;font-size:23px;line-height:23px;color:#000;transform:scaleX(0.9510);">R$ 0,00</span>
<div class="a " style="left:2007px;top:954px;width:222px;height:51px;background:#f2f2f2;"></div>
<span class="t" style="left:2030px;top:970.03px;font-size:23px;line-height:23px;color:#000;transform:scaleX(0.9510);">R$ 0,00</span>
<div class="a " style="left:2232px;top:954px;width:222px;height:51px;background:#f2f2f2;"></div>
<span class="t" style="left:2255px;top:970.03px;font-size:23px;line-height:23px;color:#000;transform:scaleX(0.9510);">R$ 0,00</span>
<div class="a " style="left:1694px;top:1008px;width:85px;height:51px;background:#d9d9d9;"></div>
<span class="t" style="left:1717.4px;top:1023.61px;font-size:23.5px;line-height:23.5px;color:#404040;font-weight:700;transform:scaleX(0.9597);">27</span>
<div class="a " style="left:1782px;top:1008px;width:222px;height:51px;background:#f2f2f2;"></div>
<span class="t" style="left:1805px;top:1024.03px;font-size:23px;line-height:23px;color:#000;transform:scaleX(0.9510);">R$ 0,00</span>
<div class="a " style="left:2007px;top:1008px;width:222px;height:51px;background:#f2f2f2;"></div>
<span class="t" style="left:2030px;top:1024.03px;font-size:23px;line-height:23px;color:#000;transform:scaleX(0.9510);">R$ 0,00</span>
<div class="a " style="left:2232px;top:1008px;width:222px;height:51px;background:#f2f2f2;"></div>
<span class="t" style="left:2255px;top:1024.03px;font-size:23px;line-height:23px;color:#000;transform:scaleX(0.9510);">R$ 0,00</span>
<div class="a " style="left:1694px;top:1062px;width:85px;height:51px;background:#d9d9d9;"></div>
<span class="t" style="left:1717.4px;top:1077.61px;font-size:23.5px;line-height:23.5px;color:#404040;font-weight:700;transform:scaleX(0.9597);">28</span>
<div class="a " style="left:1782px;top:1062px;width:222px;height:51px;background:#f2f2f2;"></div>
<span class="t" style="left:1805px;top:1078.03px;font-size:23px;line-height:23px;color:#000;transform:scaleX(0.9510);">R$ 0,00</span>
<div class="a " style="left:2007px;top:1062px;width:222px;height:51px;background:#f2f2f2;"></div>
<span class="t" style="left:2030px;top:1078.03px;font-size:23px;line-height:23px;color:#000;transform:scaleX(0.9510);">R$ 0,00</span>
<div class="a " style="left:2232px;top:1062px;width:222px;height:51px;background:#f2f2f2;"></div>
<span class="t" style="left:2255px;top:1078.03px;font-size:23px;line-height:23px;color:#000;transform:scaleX(0.9510);">R$ 0,00</span>
<div class="a " style="left:1694px;top:1116px;width:85px;height:51px;background:#d9d9d9;"></div>
<span class="t" style="left:1717.4px;top:1131.61px;font-size:23.5px;line-height:23.5px;color:#404040;font-weight:700;transform:scaleX(0.9597);">29</span>
<div class="a " style="left:1782px;top:1116px;width:222px;height:51px;background:#f2f2f2;"></div>
<span class="t" style="left:1805px;top:1132.03px;font-size:23px;line-height:23px;color:#000;transform:scaleX(0.9510);">R$ 0,00</span>
<div class="a " style="left:2007px;top:1116px;width:222px;height:51px;background:#f2f2f2;"></div>
<span class="t" style="left:2030px;top:1132.03px;font-size:23px;line-height:23px;color:#000;transform:scaleX(0.9510);">R$ 0,00</span>
<div class="a " style="left:2232px;top:1116px;width:222px;height:51px;background:#f2f2f2;"></div>
<span class="t" style="left:2255px;top:1132.03px;font-size:23px;line-height:23px;color:#000;transform:scaleX(0.9510);">R$ 0,00</span>
<div class="a " style="left:1694px;top:1170px;width:85px;height:51px;background:#d9d9d9;"></div>
<span class="t" style="left:1717.4px;top:1185.61px;font-size:23.5px;line-height:23.5px;color:#404040;font-weight:700;transform:scaleX(0.9597);">30</span>
<div class="a " style="left:1782px;top:1170px;width:222px;height:51px;background:#f2f2f2;"></div>
<span class="t" style="left:1805px;top:1186.03px;font-size:23px;line-height:23px;color:#000;transform:scaleX(0.9510);">R$ 0,00</span>
<div class="a " style="left:2007px;top:1170px;width:222px;height:51px;background:#f2f2f2;"></div>
<span class="t" style="left:2030px;top:1186.03px;font-size:23px;line-height:23px;color:#000;transform:scaleX(0.9510);">R$ 0,00</span>
<div class="a " style="left:2232px;top:1170px;width:222px;height:51px;background:#f2f2f2;"></div>
<span class="t" style="left:2255px;top:1186.03px;font-size:23px;line-height:23px;color:#000;transform:scaleX(0.9510);">R$ 0,00</span>
<div class="a " style="left:1694px;top:1276px;width:85px;height:107px;background:#d9d9d9;"></div>
<div class="a " style="left:1782px;top:1276px;width:222px;height:107px;background:#d9d9d9;"></div>
<div class="a " style="left:2007px;top:1276px;width:222px;height:107px;background:#d9d9d9;"></div>
<div class="a " style="left:2232px;top:1276px;width:222px;height:107px;background:#54ae3c;"></div>
<span class="t" style="left:1709.2px;top:1319.51px;font-size:23.5px;line-height:23.5px;color:#404040;font-weight:700;transform:scaleX(0.9967);">Total</span>
<span class="t" style="left:1832.2px;top:1319.93px;font-size:23px;line-height:23px;color:#000;transform:scaleX(0.9774);">R$ 7.500,00</span>
<span class="t" style="left:2057px;top:1319.93px;font-size:23px;line-height:23px;color:#000;transform:scaleX(0.9782);">R$ 1.500,00</span>
<span class="t" style="left:2281.6px;top:1319.93px;font-size:23px;line-height:23px;color:#fff;transform:scaleX(0.9814);">R$ 6.000,00</span>
<!-- p6_bottom -->
<div class="a " style="left:2961px;top:418px;width:39px;height:1395px;background:#e6e6e6;"></div>
<div class="a " style="left:2961px;top:623px;width:1px;height:1191px;background:#a8a8a8;"></div>
<div class="a" style="left:2964px;top:419px;width:33px;height:33px;background:#fff;border:1px solid #c1c1c1"></div>
<svg class="a" style="left:2971px;top:430px;" width="19" height="10" viewBox="0 0 19 10"><path d="M0 10H19L9.5 0Z" fill="#777"/></svg>
<div class="a" style="left:2964px;top:452px;width:33px;height:1279px;background:#fff;border:1px solid #c1c1c1"></div>
<div class="a " style="left:2964px;top:1731px;width:33px;height:51px;background:#dcdcdc;"></div>
<div class="a" style="left:2964px;top:1781px;width:33px;height:32px;background:#fff;border:1px solid #c1c1c1"></div>
<svg class="a" style="left:2971px;top:1793px;" width="19" height="10" viewBox="0 0 19 10"><path d="M0 0H19L9.5 10Z" fill="#777"/></svg>
<div class="a " style="left:0px;top:1813px;width:3000px;height:44px;background:#e6e6e6;"></div>
<div class="a " style="left:0px;top:1813px;width:2961px;height:1px;background:#a8a8a8;"></div>
<div class="a " style="left:0px;top:1856px;width:3000px;height:1px;background:#c9c9c9;"></div>
<svg class="a" style="left:34px;top:1827px;" width="9" height="15" viewBox="0 0 9 15"><path d="M8.5 0 V15 L0 7.5Z" fill="#1e6b3d"/></svg>
<svg class="a" style="left:77px;top:1827px;" width="9" height="15" viewBox="0 0 9 15"><path d="M0.5 0 V15 L9 7.5Z" fill="#1e6b3d"/></svg>
<div class="a " style="left:113px;top:1838px;width:4px;height:4px;background:#1e6b3d;"></div>
<div class="a " style="left:121px;top:1838px;width:4px;height:4px;background:#1e6b3d;"></div>
<div class="a " style="left:129px;top:1838px;width:4px;height:4px;background:#1e6b3d;"></div>
<div class="a " style="left:145px;top:1817px;width:1px;height:35px;background:#ababab;"></div>
<div class="a " style="left:214px;top:1817px;width:1px;height:35px;background:#ababab;"></div>
<div class="a " style="left:294px;top:1817px;width:1px;height:35px;background:#ababab;"></div>
<div class="a " style="left:377px;top:1817px;width:1px;height:35px;background:#ababab;"></div>
<div class="a " style="left:451px;top:1817px;width:1px;height:35px;background:#ababab;"></div>
<div class="a " style="left:553px;top:1817px;width:1px;height:35px;background:#ababab;"></div>
<div class="a " style="left:697px;top:1817px;width:1px;height:35px;background:#ababab;"></div>
<div class="a " style="left:883px;top:1817px;width:1px;height:35px;background:#ababab;"></div>
<div class="a " style="left:980px;top:1817px;width:1px;height:35px;background:#ababab;"></div>
<div class="a " style="left:1085px;top:1817px;width:1px;height:35px;background:#ababab;"></div>
<div class="a " style="left:1184px;top:1817px;width:1px;height:35px;background:#ababab;"></div>
<div class="a " style="left:1308px;top:1817px;width:1px;height:35px;background:#ababab;"></div>
<div class="a " style="left:1412px;top:1817px;width:1px;height:35px;background:#ababab;"></div>
<div class="a " style="left:1536px;top:1817px;width:1px;height:35px;background:#ababab;"></div>
<div class="a " style="left:1943px;top:1817px;width:1px;height:35px;background:#ababab;"></div>
<div class="a" style="left:1642px;top:1813px;width:156px;height:40px;background:#fff;border-left:1px solid #a8a8a8;border-right:1px solid #a8a8a8;border-bottom:2.5px solid #217346"></div>
<span class="t" style="left:159px;top:1819.94px;font-size:27px;line-height:27px;color:#444;transform:scaleX(0.7693);">SET</span>
<span class="t" style="left:227.6px;top:1819.94px;font-size:27px;line-height:27px;color:#444;transform:scaleX(0.9106);">OUT</span>
<span class="t" style="left:308px;top:1819.94px;font-size:27px;line-height:27px;color:#444;transform:scaleX(0.9434);">NOV</span>
<span class="t" style="left:390.8px;top:1819.94px;font-size:27px;line-height:27px;color:#444;transform:scaleX(0.8685);">DEZ</span>
<span class="t" style="left:467px;top:1819.94px;font-size:27px;line-height:27px;color:#444;transform:scaleX(0.8664);">CF_fat</span>
<span class="t" style="left:571px;top:1819.94px;font-size:27px;line-height:27px;color:#444;transform:scaleX(0.8993);">PC_transf</span>
<span class="t" style="left:712.6px;top:1819.94px;font-size:27px;line-height:27px;color:#444;transform:scaleX(0.8720);">CF_FC_banco</span>
<span class="t" style="left:897.5px;top:1819.94px;font-size:27px;line-height:27px;color:#444;transform:scaleX(0.8069);">CF_LP</span>
<span class="t" style="left:994.6px;top:1819.94px;font-size:27px;line-height:27px;color:#444;transform:scaleX(0.8757);">CF_inv</span>
<span class="t" style="left:1100.8px;top:1819.94px;font-size:27px;line-height:27px;color:#444;transform:scaleX(0.9287);">META</span>
<span class="t" style="left:1202.5px;top:1819.94px;font-size:27px;line-height:27px;color:#444;transform:scaleX(0.9827);">Auxiliar</span>
<span class="t" style="left:1324.3px;top:1819.94px;font-size:27px;line-height:27px;color:#444;transform:scaleX(0.8178);">REL_fc</span>
<span class="t" style="left:1427.6px;top:1819.94px;font-size:27px;line-height:27px;color:#444;transform:scaleX(0.8595);">REL_dre</span>
<span class="t" style="left:1550.6px;top:1819.94px;font-size:27px;line-height:27px;color:#444;transform:scaleX(0.8751);">CF_dia</span>
<span class="t" style="left:1813.8px;top:1819.94px;font-size:27px;line-height:27px;color:#444;transform:scaleX(0.8460);">REL_cp_cr</span>
<span class="t" style="left:1959px;top:1819.94px;font-size:27px;line-height:27px;color:#444;transform:scaleX(0.7767);">REL_</span>
<span class="t" style="left:1655.2px;top:1819.94px;font-size:27px;line-height:27px;color:#217346;font-weight:700;transform:scaleX(0.9037);">FC_dia_NP</span>
<div class="a " style="left:2024px;top:1838px;width:4px;height:4px;background:#1e6b3d;"></div>
<div class="a " style="left:2032px;top:1838px;width:4px;height:4px;background:#1e6b3d;"></div>
<div class="a " style="left:2040px;top:1838px;width:4px;height:4px;background:#1e6b3d;"></div>
<svg class="a" style="left:2062px;top:1820px;" width="32" height="32" viewBox="0 0 32 32"><circle cx="16" cy="16" r="14.6" fill="none" stroke="#7f7f7f" stroke-width="1.8"/><path d="M16 8.5 V23.5 M8.5 16 H23.5" stroke="#6a6a6a" stroke-width="2.6" fill="none"/></svg>
<div class="a " style="left:2118px;top:1824.5px;width:4px;height:4px;background:#bdbdbd;"></div>
<div class="a " style="left:2118px;top:1833.5px;width:4px;height:4px;background:#bdbdbd;"></div>
<div class="a " style="left:2118px;top:1842.5px;width:4px;height:4px;background:#bdbdbd;"></div>
<div class="a" style="left:2143px;top:1818px;width:33px;height:33px;background:#fff;border:1px solid #c1c1c1"></div>
<svg class="a" style="left:2155px;top:1825.5px;" width="9" height="17" viewBox="0 0 9 17"><path d="M9 0 V17 L0 8.5Z" fill="#777"/></svg>
<div class="a" style="left:2176px;top:1818px;width:540px;height:33px;background:#fff;border:1px solid #c1c1c1"></div>
<div class="a " style="left:2716px;top:1818px;width:211px;height:33px;background:#dcdcdc;"></div>
<div class="a" style="left:2927px;top:1818px;width:33px;height:33px;background:#fff;border:1px solid #c1c1c1"></div>
<svg class="a" style="left:2939px;top:1825.5px;" width="9" height="17" viewBox="0 0 9 17"><path d="M0 0 V17 L9 8.5Z" fill="#777"/></svg>
<div class="a " style="left:0px;top:1857px;width:3000px;height:63px;background:#f3f3f3;"></div>
<span class="t" style="left:14px;top:1877.95px;font-size:21.8px;line-height:21.8px;color:#444;transform:scaleX(0.9405);">Pronto</span>
<svg class="a" style="left:113px;top:1872px;" width="31" height="31" viewBox="0 0 31 31"><rect x="2.7" y="3.7" width="27.6" height="26.6" fill="#fff" stroke="#777" stroke-width="1.3"/><rect x="2" y="3" width="29" height="6" fill="#6a6a6a"/>
<circle cx="7" cy="7" r="7" fill="#666"/>
<path d="M8.5 14.5H14M16.5 14.5H20M22.5 14.5H25.5M8.5 18.5H14M16.5 18.5H20M22.5 18.5H25.5M8.5 22.5H14M16.5 22.5H20M22.5 22.5H25.5M8.5 26.2H14M16.5 26.2H20M22.5 26.2H25.5" stroke="#777" stroke-width="1.3"/></svg>
<div class="a " style="left:2478px;top:1857px;width:66px;height:63px;background:#c8c8c8;"></div>
<svg class="a" style="left:2495px;top:1873px;" width="32" height="32" viewBox="0 0 32 32"><rect x="0.7" y="0.7" width="30" height="30" fill="none" stroke="#777" stroke-width="1.3"/><path d="M0.7 10.5 H31 M0.7 20.5 H31 M10.5 0.7 V31 M20.5 0.7 V31" stroke="#777" stroke-width="1.2"/></svg>
<svg class="a" style="left:2560px;top:1873px;" width="35" height="32" viewBox="0 0 35 32"><rect x="0.7" y="0.7" width="32.6" height="30" fill="none" stroke="#777" stroke-width="1.3"/><rect x="8" y="5" width="18" height="21.5" fill="none" stroke="#777" stroke-width="1.2"/><path d="M11.5 10.5 H22.5 M11.5 14.5 H22.5 M11.5 18.5 H22.5 M11.5 22 H22.5" stroke="#777" stroke-width="1.2"/></svg>
<svg class="a" style="left:2625px;top:1872px;" width="35" height="33" viewBox="0 0 35 33"><rect x="0.7" y="0.7" width="32.6" height="31" fill="none" stroke="#777" stroke-width="1.3"/><path d="M10.5 0.7 V19.5 M0.7 19.5 H20.5 V0.7" fill="none" stroke="#777" stroke-width="1.2"/></svg>
<div class="a " style="left:2685px;top:1886.5px;width:12px;height:3.5px;background:#5e5e5e;"></div>
<div class="a " style="left:2706px;top:1887px;width:198px;height:2px;background:#a3a3a3;"></div>
<div class="a " style="left:2790px;top:1877px;width:10px;height:22px;background:#6a6a6a;"></div>
<div class="a " style="left:2804px;top:1882px;width:2px;height:12px;background:#a3a3a3;"></div>
<div class="a " style="left:2911.5px;top:1886.6px;width:16px;height:3px;background:#5e5e5e;"></div>
<div class="a " style="left:2918px;top:1880px;width:3px;height:16px;background:#5e5e5e;"></div>
<span class="t" style="left:2947.7px;top:1878.35px;font-size:21.8px;line-height:21.8px;color:#444;transform:scaleX(0.8642);">90%</span>
<div class="a " style="left:0px;top:1920px;width:3000px;height:13px;background:#02040a;"></div>
<div class="a " style="left:980px;top:1920px;width:96px;height:13px;background:#36393c;"></div>
<div class="a " style="left:2990px;top:1920px;width:1px;height:13px;background:#6a6a6a;"></div>
</body></html>
